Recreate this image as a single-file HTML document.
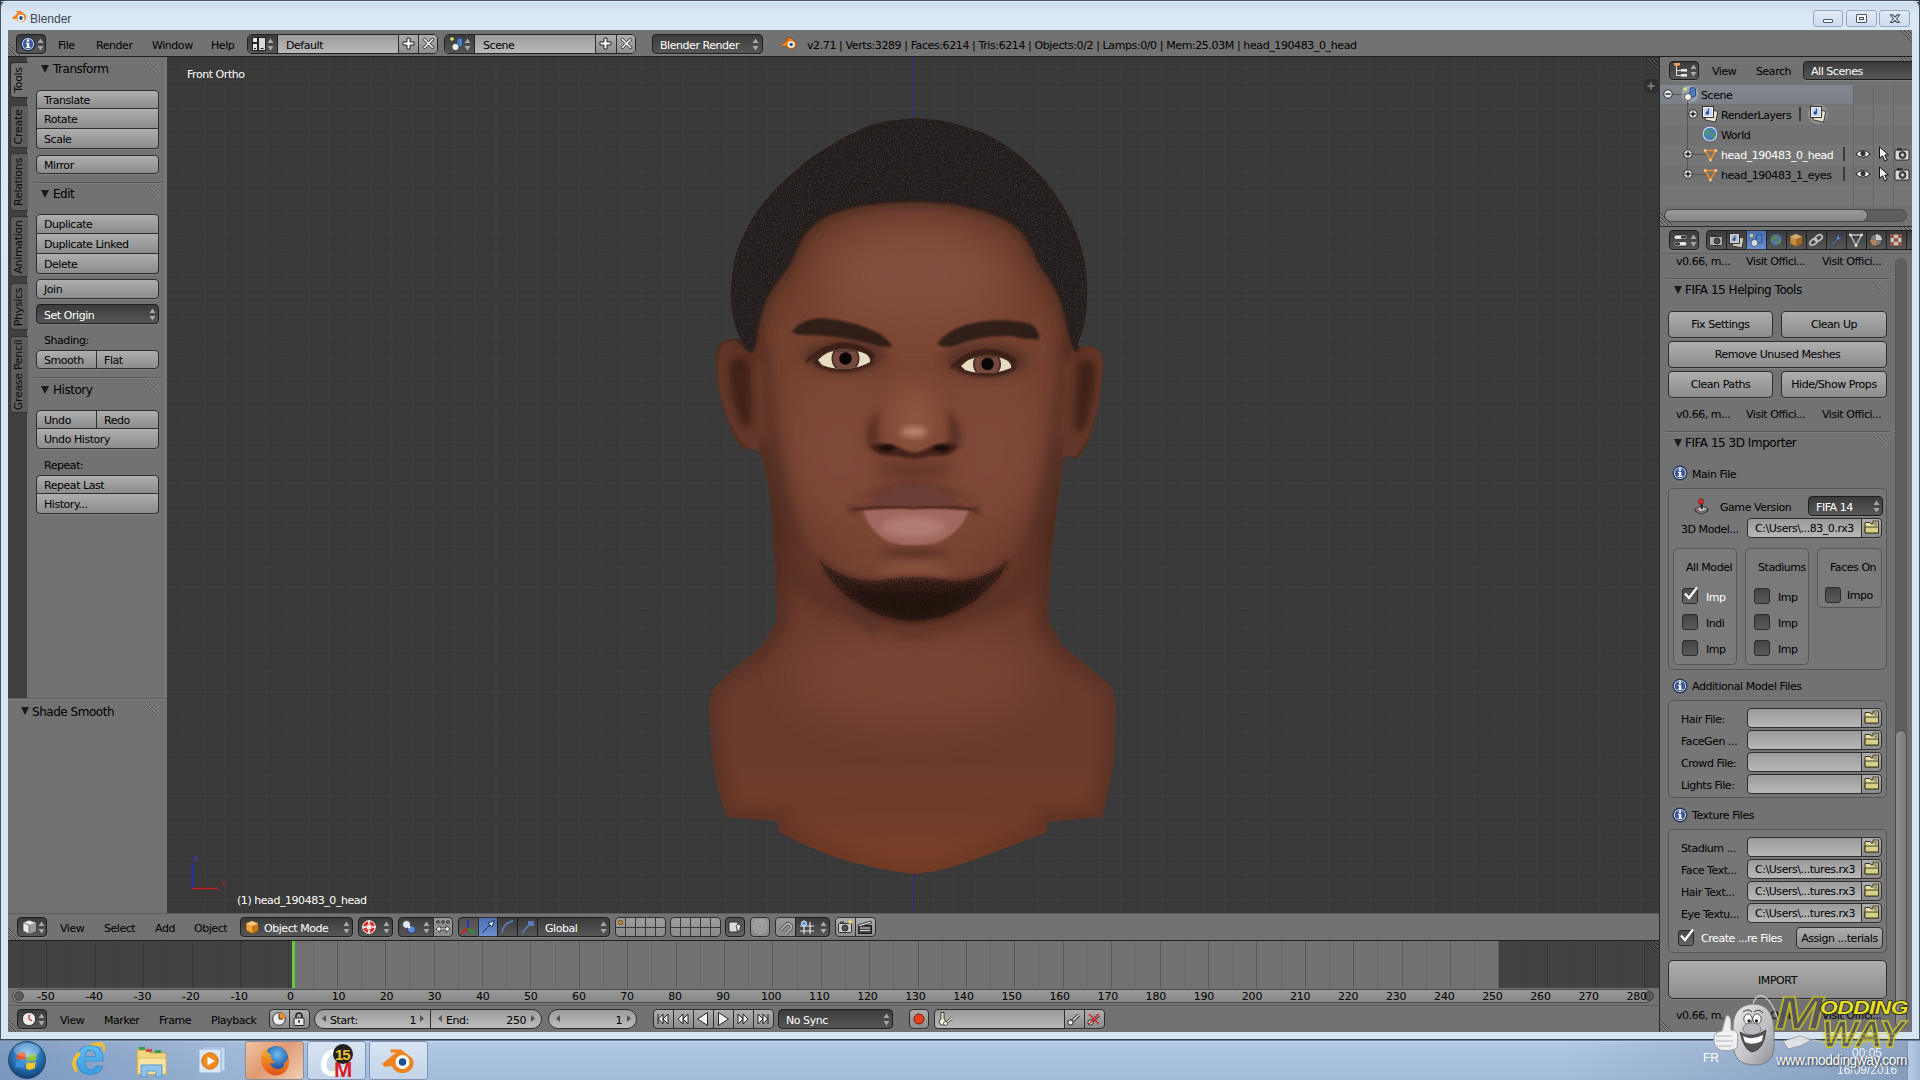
<!DOCTYPE html>
<html><head><meta charset="utf-8"><title>Blender</title>
<style>
*{box-sizing:border-box;margin:0;padding:0}
html,body{width:1920px;height:1080px;overflow:hidden;background:#2c3742}
body{position:relative;font-family:'DejaVu Sans','Liberation Sans',sans-serif;font-size:11px;letter-spacing:-0.45px;color:#000}
div,svg{position:absolute}
.t{white-space:nowrap;line-height:14px;height:14px}
.btn{border:1px solid #2e2e2e;border-radius:4px;background:linear-gradient(#aeaeae,#8c8c8c);white-space:nowrap;overflow:hidden;box-shadow:0 1px 0 rgba(255,255,255,.12)}
.btn span{position:absolute;left:7px;top:50%;line-height:14px;margin-top:-6px}
.btn.c span{left:0;right:0;text-align:center}
.dk{border:1px solid #1e1e1e;border-radius:4px;background:linear-gradient(#3b3b3b,#575757);color:#fff;white-space:nowrap;overflow:hidden;box-shadow:0 1px 0 rgba(255,255,255,.12)}
.dk span{position:absolute;left:7px;top:50%;line-height:14px;margin-top:-5px}
.fld{border:1px solid #2e2e2e;border-radius:4px;background:linear-gradient(#9a9a9a,#b8b8b8);white-space:nowrap;overflow:hidden}
.fld span{position:absolute;left:7px;top:50%;line-height:14px;margin-top:-6px}
.num{border:1px solid #2e2e2e;border-radius:9px;background:linear-gradient(#9c9c9c,#bdbdbd);white-space:nowrap;overflow:hidden}
.ph{font-size:12px;letter-spacing:-0.47px}
</style></head>
<body>
<!-- chrome -->
<div style="left:0px;top:0px;width:1920px;height:1040px;background:linear-gradient(#c9d9ec 0,#dce8f5 14px,#d9e6f4 30px,#d7e4f2 100%);border:1px solid #4a5560;border-bottom:1px solid #3c444e;border-radius:7px 7px 0 0"></div>
<div style="left:1px;top:1px;width:1918px;height:1px;background:#eef4fb;opacity:.8"></div>
<svg style="left:11px;top:9px" width="17" height="16" viewBox="0 0 17 16">
<path d="M1 9 L7.5 3.2 L5.2 3.2 L5.2 2 L10 2 L15 6.2 A5 5 0 1 1 5.6 9.8 L2.2 10.2 Z" fill="#f08220"/>
<circle cx="10" cy="9" r="3.4" fill="#fff"/><circle cx="10" cy="9" r="1.9" fill="#1f4f90"/></svg>
<div class="t" style="left:30px;top:12px;color:#3a4556;font-size:12px;letter-spacing:0;font-family:'Liberation Sans',sans-serif;font-size:12px">Blender</div>
<div style="left:1813px;top:10px;width:30px;height:17px;border:1px solid #93a7c3;border-radius:3px;background:linear-gradient(#e2ebf6,#cfdcee)"></div>
<div style="left:1846px;top:10px;width:31px;height:17px;border:1px solid #93a7c3;border-radius:3px;background:linear-gradient(#e2ebf6,#cfdcee)"></div>
<div style="left:1879px;top:10px;width:31px;height:17px;border:1px solid #93a7c3;border-radius:3px;background:linear-gradient(#e2ebf6,#cfdcee)"></div>
<div style="left:1823px;top:19px;width:10px;height:4px;border:1px solid #4b5868;background:#f4f7fb;border-radius:1px"></div>
<div style="left:1856px;top:14px;width:11px;height:9px;border:1px solid #4b5868;background:#f4f7fb;border-radius:1px"></div>
<div style="left:1859px;top:17px;width:5px;height:3px;border:1px solid #4b5868;background:#d5e0ee"></div>
<svg style="left:1888.5px;top:13.5px" width="12" height="9.5" viewBox="0 0 13 11" preserveAspectRatio="none"><path d="M1.5 1 L4.2 1 L6.5 3.6 L8.8 1 L11.5 1 L8.2 5.5 L11.5 10 L8.8 10 L6.5 7.4 L4.2 10 L1.5 10 L4.8 5.5 Z" fill="#f4f7fb" stroke="#4b5868" stroke-width="1.2"/></svg>
<div style="left:8px;top:30px;width:1904px;height:1002px;background:#2a2a2a"></div>
<div style="left:0px;top:1040px;width:1920px;height:40px;background:linear-gradient(#b4cae4 0,#a9c2df 40%,#a3bddb 100%);border-top:1px solid #6c7f96"></div>
<div style="left:0px;top:1041px;width:1920px;height:1px;background:#cfdff0;opacity:.7"></div>
<div style="left:0px;top:1041px;width:330px;height:39px;background:linear-gradient(90deg,rgba(90,120,165,.55),rgba(90,120,165,0))"></div>
<div style="left:1560px;top:1041px;width:360px;height:39px;background:linear-gradient(90deg,rgba(80,100,135,0),rgba(80,100,135,.38))"></div>
<svg style="left:5px;top:1040px" width="44" height="40" viewBox="0 0 44 40">
<defs><radialGradient id="orb" cx="50%" cy="35%" r="65%"><stop offset="0" stop-color="#7fc3ee"/><stop offset=".55" stop-color="#2a77b8"/><stop offset="1" stop-color="#123e72"/></radialGradient></defs>
<circle cx="22" cy="20" r="18.5" fill="url(#orb)" stroke="#274a74" stroke-width="1"/>
<path d="M12.5 13.5 Q17 11 21 13.5 L20 20 Q16.5 18 11.5 20 Z" fill="#e8542a"/>
<path d="M23 13.8 Q27 16 32 13.5 L31 20 Q26.5 22.5 22 20.2 Z" fill="#8fc43a"/>
<path d="M11.2 21.5 Q16 19.5 19.8 21.8 L18.8 28.5 Q15 26 10.2 28 Z" fill="#3a8fdc"/>
<path d="M21.8 22 Q26 24.3 30.8 21.8 L29.8 28.3 Q25 30.8 20.8 28.6 Z" fill="#f6c62d"/>
<ellipse cx="22" cy="10" rx="13" ry="7" fill="#fff" opacity=".25"/></svg>
<svg style="left:68px;top:1040px" width="44" height="40" viewBox="0 0 44 40">
<defs><linearGradient id="ieg" x1="0" y1="0" x2="0" y2="1"><stop offset="0" stop-color="#7fd0f6"/><stop offset="1" stop-color="#2a93dc"/></linearGradient></defs>
<path d="M8 30 Q2 22 12 12 Q22 3 34 4" fill="none" stroke="#f0bf35" stroke-width="3.2" stroke-linecap="round"/>
<text x="7" y="34" font-family="'Liberation Sans',sans-serif" font-size="54" font-weight="bold" fill="url(#ieg)" stroke="#2a7fc8" stroke-width=".6" letter-spacing="0">e</text>
<path d="M8 30 Q3 23 11 14" fill="none" stroke="#f0bf35" stroke-width="3.2" stroke-linecap="round"/>
<path d="M30 5 Q37 4 36 10" fill="none" stroke="#f0bf35" stroke-width="2.6" stroke-linecap="round"/></svg>
<svg style="left:134px;top:1044px" width="36" height="34" viewBox="0 0 36 34">
<path d="M3 6 L14 6 L16 9 L32 9 L32 30 L3 30 Z" fill="#f3d681" stroke="#c9a545" stroke-width="1"/>
<rect x="5" y="3" width="6" height="3" fill="#3d9c4a"/><rect x="12" y="5" width="6" height="3" fill="#d64a3a"/><rect x="21" y="6" width="6" height="3" fill="#3d9c4a"/>
<path d="M4 14 L32 14 L32 30 L4 30 Z" fill="#f8e5a6" stroke="#d4b45a" stroke-width=".8"/>
<path d="M7 21 L28 21 L28 33 L22 33 L22 27 L13 27 L13 33 L7 33 Z" fill="#8fc3ec" stroke="#5c97c8" stroke-width="1"/></svg>
<svg style="left:196px;top:1046px" width="34" height="30" viewBox="0 0 34 30">
<rect x="7" y="1" width="22" height="24" fill="#c7dcf0" stroke="#8fb2d6" stroke-width="1"/>
<rect x="3" y="3" width="22" height="24" fill="#dbe9f6" stroke="#8fb2d6" stroke-width="1"/>
<circle cx="14" cy="15" r="8.3" fill="#f08a1e" stroke="#c86a10" stroke-width=".8"/><path d="M11.5 10.5 L19 15 L11.5 19.5 Z" fill="#fff"/></svg>
<div style="left:245px;top:1041px;width:59px;height:39px;border:1px solid #8a8fa0;border-radius:3px;background:linear-gradient(135deg,#f2c4a4 0,#e09a72 45%,#f1cdb6 100%)"></div>
<div style="left:307px;top:1041px;width:59px;height:39px;border:1px solid #7f94b4;border-radius:3px;background:linear-gradient(#d9e5f3,#c2d3e8)"></div>
<div style="left:369px;top:1041px;width:59px;height:39px;border:1px solid #7f94b4;border-radius:3px;background:linear-gradient(#d9e5f3,#c2d3e8)"></div>
<svg style="left:258px;top:1043px" width="34" height="34" viewBox="0 0 34 34">
<defs><radialGradient id="ffg" cx="55%" cy="35%" r="60%"><stop offset="0" stop-color="#6cc0f0"/><stop offset="1" stop-color="#1d4e9e"/></radialGradient>
<linearGradient id="ffo" x1="0" y1="0" x2="0" y2="1"><stop offset="0" stop-color="#f6b12b"/><stop offset="1" stop-color="#e2511a"/></linearGradient></defs>
<circle cx="18" cy="15" r="12" fill="url(#ffg)"/>
<path d="M3 12 Q2 24 10 30 Q18 35 26 30 Q33 24 31 12 Q30 18 26 20 Q27 26 19 26 Q13 25 12 20 Q15 21 17 19 Q12 16 13 12 Q9 10 8 5 Q4 8 5 13 Z" fill="url(#ffo)"/></svg>
<svg style="left:317px;top:1043px" width="42" height="36" viewBox="0 0 42 36">
<text x="2" y="33" font-family="'Liberation Sans',sans-serif" font-style="italic" font-weight="bold" font-size="38" fill="#fff">C</text>
<text x="17" y="34" font-family="'Liberation Sans',sans-serif" font-weight="bold" font-size="22" fill="#d61f2c">M</text>
<circle cx="26" cy="11" r="10" fill="#222"/>
<text x="18" y="17" font-family="'Liberation Sans',sans-serif" font-weight="bold" font-size="15" fill="#f2c12a" letter-spacing="-1">15</text></svg>
<svg style="left:381px;top:1045px" width="36" height="30" viewBox="0 0 36 30">
<path d="M1 19 L15 7.5 L9.5 7.5 L9.5 4.5 L20 4.5 L31 13 A11 10 0 1 1 11 21 L4 22 Z" fill="#f08220"/>
<circle cx="21.5" cy="17" r="7" fill="#fff"/><circle cx="21.5" cy="17" r="3.8" fill="#1f4f90"/></svg>
<div class="t" style="left:1703px;top:1051px;color:#fff;font-size:12px;letter-spacing:0;font-family:'Liberation Sans',sans-serif">FR</div>
<div class="t" style="left:1852px;top:1046px;color:#fff;font-size:12px;letter-spacing:0;font-family:'Liberation Sans',sans-serif;opacity:.85">00:05</div>
<div class="t" style="left:1837px;top:1063px;color:#fff;font-size:12px;letter-spacing:0;font-family:'Liberation Sans',sans-serif;opacity:.85">16/09/2016</div>
<div style="left:1907px;top:1041px;width:13px;height:39px;border-left:1px solid #7f94b4;background:linear-gradient(90deg,#b9cde6,#9fb8d6)"></div>
<!-- info -->
<div style="left:8px;top:30px;width:1904px;height:27px;background:#727272;border-bottom:1px solid #1f1f1f"></div>
<svg style="left:8px;top:44px" width="12" height="12" viewBox="0 0 12 12"><path d="M0 1 L11 12 M0 5 L7 12 M0 9 L3 12" stroke="rgba(255,255,255,.16)" stroke-width="1" fill="none"/><path d="M0 0 L12 12 M0 4 L8 12 M0 8 L4 12" stroke="rgba(0,0,0,.42)" stroke-width="1" fill="none"/></svg>
<svg style="left:1900px;top:30px" width="12" height="12" viewBox="0 0 12 12"><path d="M1 0 L12 11 M5 0 L12 7 M9 0 L12 3" stroke="rgba(255,255,255,.16)" stroke-width="1" fill="none"/><path d="M0 0 L12 12 M4 0 L12 8 M8 0 L12 4" stroke="rgba(0,0,0,.42)" stroke-width="1" fill="none"/></svg>
<div class="dk" style="left:16px;top:34px;width:30px;height:20px;"></div>
<svg style="left:20px;top:36px" width="16" height="16" viewBox="0 0 16 16"><circle cx="8" cy="8" r="6.8" fill="#e9eef7" stroke="#27365a" stroke-width="1.6"/><circle cx="8" cy="8" r="5.2" fill="#3e5a9a"/><rect x="7" y="6.8" width="2.2" height="5" fill="#fff"/><rect x="6" y="6.8" width="2" height="1.2" fill="#fff"/><rect x="5.8" y="10.8" width="4.6" height="1.2" fill="#fff"/><circle cx="8" cy="4.6" r="1.3" fill="#fff"/></svg>
<svg style="left:37px;top:38px" width="7" height="13" viewBox="0 0 7 13"><path d="M3.5 0.5 L6.5 5 L0.5 5 Z M3.5 12.5 L6.5 8 L0.5 8 Z" fill="#a8a8a8"/></svg>
<div class="t" style="left:58px;top:39px;color:#000;font-size:11px;">File</div>
<div class="t" style="left:96px;top:39px;color:#000;font-size:11px;">Render</div>
<div class="t" style="left:152px;top:39px;color:#000;font-size:11px;">Window</div>
<div class="t" style="left:211px;top:39px;color:#000;font-size:11px;">Help</div>
<div style="left:247px;top:34px;width:191px;height:20px;border:1px solid #222;border-radius:5px;background:linear-gradient(#9c9c9c,#b9b9b9);overflow:hidden"><div style="left:-1px;top:-1px;width:31px;height:20px;background:linear-gradient(#3a3a3a,#565656);border-right:1px solid #222"></div><div style="left:150px;top:-1px;width:20px;height:20px;background:linear-gradient(#aeaeae,#8c8c8c);border-left:1px solid #2e2e2e"></div><div style="left:170px;top:-1px;width:20px;height:20px;background:linear-gradient(#aeaeae,#8c8c8c);border-left:1px solid #2e2e2e"></div></div>
<svg style="left:252px;top:37px" width="14" height="14" viewBox="0 0 14 14"><rect x=".5" y=".5" width="5" height="5" fill="#e8e8e8" stroke="#222"/><rect x=".5" y="6.5" width="5" height="7" fill="#e8e8e8" stroke="#222"/><rect x="6.5" y=".5" width="7" height="13" fill="#d8d8d8" stroke="#222"/><rect x="2" y="11" width="2" height="1" fill="#222"/><rect x="8.5" y="11" width="3" height="1" fill="#222"/></svg>
<svg style="left:267px;top:38px" width="7" height="13" viewBox="0 0 7 13"><path d="M3.5 0.5 L6.5 5 L0.5 5 Z M3.5 12.5 L6.5 8 L0.5 8 Z" fill="#a8a8a8"/></svg>
<div class="t" style="left:286px;top:39px;color:#000;font-size:11px;">Default</div>
<svg style="left:402px;top:37px" width="13" height="13" viewBox="0 0 13 13"><path d="M5 1 L8 1 L8 5 L12 5 L12 8 L8 8 L8 12 L5 12 L5 8 L1 8 L1 5 L5 5 Z" fill="#fff" stroke="#222" stroke-width="1"/></svg>
<svg style="left:422px;top:37px" width="13" height="13" viewBox="0 0 13 13"><path d="M1 2.6 L2.6 1 L6.5 4.9 L10.4 1 L12 2.6 L8.1 6.5 L12 10.4 L10.4 12 L6.5 8.1 L2.6 12 L1 10.4 L4.9 6.5 Z" fill="#fff" stroke="#222" stroke-width="1"/></svg>
<div style="left:444px;top:34px;width:192px;height:20px;border:1px solid #222;border-radius:5px;background:linear-gradient(#9c9c9c,#b9b9b9);overflow:hidden"><div style="left:-1px;top:-1px;width:31px;height:20px;background:linear-gradient(#3a3a3a,#565656);border-right:1px solid #222"></div><div style="left:150px;top:-1px;width:21px;height:20px;background:linear-gradient(#aeaeae,#8c8c8c);border-left:1px solid #2e2e2e"></div><div style="left:171px;top:-1px;width:20px;height:20px;background:linear-gradient(#aeaeae,#8c8c8c);border-left:1px solid #2e2e2e"></div></div>
<svg style="left:449px;top:36px" width="16" height="16" viewBox="0 0 16 16"><rect x="8" y="2" width="5.5" height="9" rx="2.2" fill="#4b7fc2" stroke="#1d3a6a" stroke-width=".8"/><circle cx="6.5" cy="11" r="3.6" fill="#ececec" stroke="#333" stroke-width=".8"/><circle cx="3" cy="3" r="1.8" fill="#e9e27a"/></svg>
<svg style="left:464px;top:38px" width="7" height="13" viewBox="0 0 7 13"><path d="M3.5 0.5 L6.5 5 L0.5 5 Z M3.5 12.5 L6.5 8 L0.5 8 Z" fill="#a8a8a8"/></svg>
<div class="t" style="left:483px;top:39px;color:#000;font-size:11px;">Scene</div>
<svg style="left:599px;top:37px" width="13" height="13" viewBox="0 0 13 13"><path d="M5 1 L8 1 L8 5 L12 5 L12 8 L8 8 L8 12 L5 12 L5 8 L1 8 L1 5 L5 5 Z" fill="#fff" stroke="#222" stroke-width="1"/></svg>
<svg style="left:620px;top:37px" width="13" height="13" viewBox="0 0 13 13"><path d="M1 2.6 L2.6 1 L6.5 4.9 L10.4 1 L12 2.6 L8.1 6.5 L12 10.4 L10.4 12 L6.5 8.1 L2.6 12 L1 10.4 L4.9 6.5 Z" fill="#fff" stroke="#222" stroke-width="1"/></svg>
<div class="dk" style="left:652px;top:34px;width:111px;height:20px;"><span style="">Blender Render</span></div>
<svg style="left:752px;top:38px" width="7" height="13" viewBox="0 0 7 13"><path d="M3.5 0.5 L6.5 5 L0.5 5 Z M3.5 12.5 L6.5 8 L0.5 8 Z" fill="#a8a8a8"/></svg>
<svg style="left:781px;top:36px" width="17" height="15" viewBox="0 0 17 15">
<path d="M0.5 9 L7 3.4 L4.4 3.4 L4.4 2 L9.6 2 L15 6.2 A5.2 4.8 0 1 1 5.2 10 L2 10.5 Z" fill="#f08220" stroke="#7a3a0a" stroke-width=".5"/>
<circle cx="10.2" cy="8.5" r="3.3" fill="#fff"/><circle cx="10.2" cy="8.5" r="1.8" fill="#1f4f90"/></svg>
<div class="t" style="left:807px;top:39px;color:#000;font-size:11px;letter-spacing:-0.40px">v2.71 | Verts:3289 | Faces:6214 | Tris:6214 | Objects:0/2 | Lamps:0/0 | Mem:25.03M | head_190483_0_head</div>
<!-- tools -->
<div style="left:8px;top:57px;width:20px;height:641px;background:#404040"></div>
<div style="left:27px;top:57px;width:140px;height:641px;background:#727272"></div>
<div style="left:163px;top:57px;width:4px;height:641px;background:linear-gradient(90deg,#727272,#7a7a7a)"></div>
<div style="left:10px;top:62px;width:18px;height:36px;background:#727272;border-radius:4px 0 0 4px;border:1px solid #2a2a2a;border-right:none"></div><div class="t" style="left:11px;top:62px;width:16px;height:36px"><div class="t" style="left:8px;top:18.0px;transform:translate(-50%,-50%) rotate(-90deg);font-size:11px;letter-spacing:-0.3px;color:#0a0a0a">Tools</div></div>
<div style="left:10px;top:105px;width:18px;height:43px;background:#5d5d5d;border-radius:4px 0 0 4px;border:1px solid #333;border-right:none"></div><div class="t" style="left:11px;top:105px;width:16px;height:43px"><div class="t" style="left:8px;top:21.5px;transform:translate(-50%,-50%) rotate(-90deg);font-size:11px;letter-spacing:-0.3px;color:#0a0a0a">Create</div></div>
<div style="left:10px;top:153px;width:18px;height:58px;background:#5d5d5d;border-radius:4px 0 0 4px;border:1px solid #333;border-right:none"></div><div class="t" style="left:11px;top:153px;width:16px;height:58px"><div class="t" style="left:8px;top:29.0px;transform:translate(-50%,-50%) rotate(-90deg);font-size:11px;letter-spacing:-0.3px;color:#0a0a0a">Relations</div></div>
<div style="left:10px;top:216px;width:18px;height:61px;background:#5d5d5d;border-radius:4px 0 0 4px;border:1px solid #333;border-right:none"></div><div class="t" style="left:11px;top:216px;width:16px;height:61px"><div class="t" style="left:8px;top:30.5px;transform:translate(-50%,-50%) rotate(-90deg);font-size:11px;letter-spacing:-0.3px;color:#0a0a0a">Animation</div></div>
<div style="left:10px;top:283px;width:18px;height:47px;background:#5d5d5d;border-radius:4px 0 0 4px;border:1px solid #333;border-right:none"></div><div class="t" style="left:11px;top:283px;width:16px;height:47px"><div class="t" style="left:8px;top:23.5px;transform:translate(-50%,-50%) rotate(-90deg);font-size:11px;letter-spacing:-0.3px;color:#0a0a0a">Physics</div></div>
<div style="left:10px;top:336px;width:18px;height:77px;background:#5d5d5d;border-radius:4px 0 0 4px;border:1px solid #333;border-right:none"></div><div class="t" style="left:11px;top:336px;width:16px;height:77px"><div class="t" style="left:8px;top:38.5px;transform:translate(-50%,-50%) rotate(-90deg);font-size:11px;letter-spacing:-0.3px;color:#0a0a0a">Grease Pencil</div></div>
<svg style="left:41px;top:65px" width="8" height="8" viewBox="0 0 8 8"><path d="M0 0 L8 0 L4 8 Z" fill="#1a1a1a"/></svg>
<div class="t ph" style="left:53px;top:62px;color:#000;font-size:12px;">Transform</div>
<svg style="left:145px;top:62px" width="14" height="14" viewBox="0 0 14 14"><path d="M1 0 L14 13 M5 0 L14 9 M9 0 L14 5" stroke="#8a8a8a" stroke-width="1" fill="none"/><path d="M0 0 L13 13 M4 0 L13 9 M8 0 L13 5" stroke="#5c5c5c" stroke-width="1" fill="none"/></svg>
<div class="btn" style="left:36px;top:90px;width:123px;height:19px;border-radius:4px 4px 0 0;box-shadow:none;"><span style="">Translate</span></div><div class="btn" style="left:36px;top:109px;width:123px;height:20px;border-radius:0;border-top:none;box-shadow:none;"><span style="">Rotate</span></div><div class="btn" style="left:36px;top:129px;width:123px;height:20px;border-radius:0 0 4px 4px;border-top:none;"><span style="">Scale</span></div>
<div class="btn" style="left:36px;top:155px;width:123px;height:19px;border-radius:4px;"><span style="">Mirror</span></div>
<div style="left:33px;top:182px;width:129px;height:1px;background:#5a5a5a"></div>
<div style="left:33px;top:183px;width:129px;height:1px;background:#7e7e7e"></div>
<svg style="left:41px;top:190px" width="8" height="8" viewBox="0 0 8 8"><path d="M0 0 L8 0 L4 8 Z" fill="#1a1a1a"/></svg>
<div class="t ph" style="left:53px;top:187px;color:#000;font-size:12px;">Edit</div>
<svg style="left:145px;top:187px" width="14" height="14" viewBox="0 0 14 14"><path d="M1 0 L14 13 M5 0 L14 9 M9 0 L14 5" stroke="#8a8a8a" stroke-width="1" fill="none"/><path d="M0 0 L13 13 M4 0 L13 9 M8 0 L13 5" stroke="#5c5c5c" stroke-width="1" fill="none"/></svg>
<div class="btn" style="left:36px;top:214px;width:123px;height:20px;border-radius:4px 4px 0 0;box-shadow:none;"><span style="">Duplicate</span></div><div class="btn" style="left:36px;top:234px;width:123px;height:20px;border-radius:0;border-top:none;box-shadow:none;"><span style="">Duplicate Linked</span></div><div class="btn" style="left:36px;top:254px;width:123px;height:20px;border-radius:0 0 4px 4px;border-top:none;"><span style="">Delete</span></div>
<div class="btn" style="left:36px;top:279px;width:123px;height:20px;border-radius:4px;"><span style="">Join</span></div>
<div class="dk" style="left:36px;top:304px;width:123px;height:20px;"><span style="">Set Origin</span></div>
<svg style="left:149px;top:308px" width="7" height="13" viewBox="0 0 7 13"><path d="M3.5 0.5 L6.5 5 L0.5 5 Z M3.5 12.5 L6.5 8 L0.5 8 Z" fill="#a8a8a8"/></svg>
<div class="t" style="left:44px;top:334px;color:#000;font-size:11px;">Shading:</div>
<div class="btn" style="left:36px;top:350px;width:61px;height:19px;border-radius:4px 0 0 4px"><span style="">Smooth</span></div><div class="btn" style="left:96px;top:350px;width:63px;height:19px;border-radius:0 4px 4px 0"><span style="">Flat</span></div>
<div style="left:33px;top:377px;width:129px;height:1px;background:#5a5a5a"></div>
<div style="left:33px;top:378px;width:129px;height:1px;background:#7e7e7e"></div>
<svg style="left:41px;top:386px" width="8" height="8" viewBox="0 0 8 8"><path d="M0 0 L8 0 L4 8 Z" fill="#1a1a1a"/></svg>
<div class="t ph" style="left:53px;top:383px;color:#000;font-size:12px;">History</div>
<svg style="left:145px;top:382px" width="14" height="14" viewBox="0 0 14 14"><path d="M1 0 L14 13 M5 0 L14 9 M9 0 L14 5" stroke="#8a8a8a" stroke-width="1" fill="none"/><path d="M0 0 L13 13 M4 0 L13 9 M8 0 L13 5" stroke="#5c5c5c" stroke-width="1" fill="none"/></svg>
<div class="btn" style="left:36px;top:410px;width:61px;height:19px;border-radius:4px 0 0 0;box-shadow:none"><span style="">Undo</span></div>
<div class="btn" style="left:96px;top:410px;width:63px;height:19px;border-radius:0 4px 0 0;box-shadow:none"><span style="">Redo</span></div>
<div class="btn" style="left:36px;top:428px;width:123px;height:21px;border-radius:0 0 4px 4px"><span style="">Undo History</span></div>
<div class="t" style="left:44px;top:459px;color:#000;font-size:11px;">Repeat:</div>
<div class="btn" style="left:36px;top:475px;width:123px;height:19px;border-radius:4px 4px 0 0;box-shadow:none;"><span style="">Repeat Last</span></div><div class="btn" style="left:36px;top:494px;width:123px;height:20px;border-radius:0 0 4px 4px;border-top:none;"><span style="">History...</span></div>
<div style="left:8px;top:698px;width:159px;height:215px;background:#727272;border-top:1px solid #5c5c5c"></div>
<div style="left:8px;top:699px;width:159px;height:1px;background:#808080"></div>
<svg style="left:21px;top:707px" width="8" height="8" viewBox="0 0 8 8"><path d="M0 0 L8 0 L4 8 Z" fill="#1a1a1a"/></svg>
<div class="t ph" style="left:32px;top:705px;color:#000;font-size:12px;">Shade Smooth</div>
<svg style="left:145px;top:703px" width="14" height="14" viewBox="0 0 14 14"><path d="M1 0 L14 13 M5 0 L14 9 M9 0 L14 5" stroke="#8a8a8a" stroke-width="1" fill="none"/><path d="M0 0 L13 13 M4 0 L13 9 M8 0 L13 5" stroke="#5c5c5c" stroke-width="1" fill="none"/></svg>
<!-- view3d -->
<div style="left:167px;top:57px;width:1492px;height:856px;background-color:#393939;background-image:linear-gradient(90deg,rgba(255,255,255,.028) 1px,transparent 1px),linear-gradient(rgba(255,255,255,.028) 1px,transparent 1px);background-size:20.84px 20.84px;background-position:16.1px 9.4px;overflow:hidden"></div>
<svg style="left:0;top:0" width="1920" height="1080" viewBox="0 0 1920 1080">
<defs>
<linearGradient id="fadeg" x1="0" y1="540" x2="0" y2="680" gradientUnits="userSpaceOnUse"><stop offset="0" stop-color="#fff"/><stop offset="1" stop-color="#000"/></linearGradient>
<mask id="upper" maskUnits="userSpaceOnUse" x="690" y="100" width="450" height="800"><rect x="690" y="100" width="450" height="800" fill="url(#fadeg)"/></mask>
<clipPath id="topc"><rect x="700" y="100" width="430" height="252"/></clipPath>
<clipPath id="vp"><rect x="167" y="57" width="1492" height="856"/></clipPath>
<clipPath id="sil"><path d="M914.0 118.5 C918.7 118.9 933.2 119.5 942.0 121.0 C950.8 122.5 958.7 124.8 967.0 127.5 C975.3 130.2 983.7 133.1 992.0 137.5 C1000.3 141.9 1008.7 147.3 1017.0 154.0 C1025.3 160.7 1034.5 169.0 1042.0 177.5 C1049.5 186.0 1056.3 195.8 1062.0 205.0 C1067.7 214.2 1072.3 223.3 1076.0 232.5 C1079.7 241.7 1082.2 250.8 1084.0 260.0 C1085.8 269.2 1086.7 278.8 1087.0 287.5 C1087.3 296.2 1087.0 304.6 1086.0 312.5 C1085.0 320.4 1082.3 329.4 1081.0 335.0 C1079.7 340.6 1077.2 344.2 1078.0 346.0 C1078.8 347.8 1082.8 345.5 1086.0 346.0 C1089.2 346.5 1094.3 347.0 1097.0 349.0 C1099.7 351.0 1101.2 353.7 1102.0 358.0 C1102.8 362.3 1102.7 366.8 1102.0 375.0 C1101.3 383.2 1100.0 396.7 1098.0 407.0 C1096.0 417.3 1093.3 428.7 1090.0 437.0 C1086.7 445.3 1082.0 453.8 1078.0 457.0 C1074.0 460.2 1068.7 453.8 1066.0 456.0 C1063.3 458.2 1063.5 461.5 1062.0 470.0 C1060.5 478.5 1058.8 492.0 1057.0 507.0 C1055.2 522.0 1052.3 544.5 1051.0 560.0 C1049.7 575.5 1049.3 589.7 1049.0 600.0 C1048.7 610.3 1049.0 618.3 1049.0 622.0 L1049.0 622.0 L1062.0 645.0 L1092.0 670.0 L1112.0 687.0 L1116.0 705.0 L1114.0 760.0 L1107.0 797.0 L1102.0 817.0 L1048.0 822.0 L1046.0 832.5 L1030.0 838.5 L1010.0 846.0 L992.0 853.0 L973.0 860.0 L955.0 866.0 L935.0 871.0 L914.0 874.0 L893.0 871.0 L873.0 867.0 L855.0 863.0 L830.0 855.0 L805.0 845.0 L780.0 832.5 L777.0 821.0 L727.5 817.0 L720.0 797.0 L712.5 760.0 L709.0 705.0 L712.5 690.0 L730.0 672.5 L762.5 645.0 L776.0 622.5 C776.0 618.8 776.2 610.4 776.0 600.0 C775.8 589.6 776.0 577.5 775.0 560.0 C774.0 542.5 772.0 511.3 770.0 495.0 C768.0 478.7 765.2 469.5 763.0 462.0 C760.8 454.5 760.5 452.5 757.0 450.0 C753.5 447.5 746.5 450.8 742.0 447.0 C737.5 443.2 733.7 435.7 730.0 427.0 C726.3 418.3 722.3 406.2 720.0 395.0 C717.7 383.8 716.2 368.2 716.0 360.0 C715.8 351.8 717.2 349.3 719.0 346.0 C720.8 342.7 723.8 341.2 727.0 340.0 C730.2 338.8 735.2 338.3 738.0 339.0 C740.8 339.7 743.7 344.2 744.0 344.0 C744.3 343.8 741.7 341.5 740.0 337.5 C738.3 333.5 735.5 326.2 734.0 320.0 C732.5 313.8 731.3 306.7 731.0 300.0 C730.7 293.3 731.2 287.5 732.0 280.0 C732.8 272.5 733.8 262.9 736.0 255.0 C738.2 247.1 741.0 240.4 745.0 232.5 C749.0 224.6 754.2 215.4 760.0 207.5 C765.8 199.6 772.5 192.5 780.0 185.0 C787.5 177.5 796.7 169.0 805.0 162.5 C813.3 156.0 821.7 151.0 830.0 146.0 C838.3 141.0 846.7 136.4 855.0 132.5 C863.3 128.6 870.2 124.8 880.0 122.5 C889.8 120.2 908.3 119.2 914.0 118.5Z"/></clipPath>
<filter id="b3" x="-30%" y="-30%" width="160%" height="160%"><feGaussianBlur stdDeviation="3"/></filter>
<filter id="b6" x="-30%" y="-30%" width="160%" height="160%"><feGaussianBlur stdDeviation="6"/></filter>
<filter id="b12" x="-40%" y="-40%" width="180%" height="180%"><feGaussianBlur stdDeviation="12"/></filter>
<filter id="b20" x="-50%" y="-50%" width="200%" height="200%"><feGaussianBlur stdDeviation="20"/></filter>
<filter id="hn" x="0" y="0" width="100%" height="100%" color-interpolation-filters="sRGB"><feTurbulence type="fractalNoise" baseFrequency="0.85" numOctaves="2" seed="3" result="n"/><feColorMatrix in="n" values="0 0 0 0 0.34  0 0 0 0 0.28  0 0 0 0 0.25  0 0 0 2.0 -1.0" result="c"/><feComposite in="c" in2="SourceGraphic" operator="in"/></filter>
<filter id="bn" x="0" y="0" width="100%" height="100%" color-interpolation-filters="sRGB"><feTurbulence type="fractalNoise" baseFrequency="0.8" numOctaves="2" seed="7" result="n"/><feColorMatrix in="n" values="0 0 0 0 0.08  0 0 0 0 0.05  0 0 0 0 0.04  0 0 0 2.4 -1.05" result="c"/><feComposite in="c" in2="SourceGraphic" operator="in"/></filter>
<filter id="b1" x="-20%" y="-20%" width="140%" height="140%"><feGaussianBlur stdDeviation="1.2"/></filter>
<linearGradient id="skin" x1="0" y1="118" x2="0" y2="874" gradientUnits="userSpaceOnUse">
<stop offset="0" stop-color="#6e3f31"/><stop offset=".35" stop-color="#724130"/><stop offset=".62" stop-color="#6a3c2e"/><stop offset=".85" stop-color="#6a3b2c"/><stop offset="1" stop-color="#763d28"/></linearGradient>
</defs>
<g clip-path="url(#vp)">
<line x1="913.5" y1="57" x2="913.5" y2="913" stroke="#2a2a8c" stroke-width="1"/>
<g clip-path="url(#topc)"><path d="M914.0 118.5 C918.7 118.9 933.2 119.5 942.0 121.0 C950.8 122.5 958.7 124.8 967.0 127.5 C975.3 130.2 983.7 133.1 992.0 137.5 C1000.3 141.9 1008.7 147.3 1017.0 154.0 C1025.3 160.7 1034.5 169.0 1042.0 177.5 C1049.5 186.0 1056.3 195.8 1062.0 205.0 C1067.7 214.2 1072.3 223.3 1076.0 232.5 C1079.7 241.7 1082.2 250.8 1084.0 260.0 C1085.8 269.2 1086.7 278.8 1087.0 287.5 C1087.3 296.2 1087.0 304.6 1086.0 312.5 C1085.0 320.4 1082.3 329.4 1081.0 335.0 C1079.7 340.6 1077.2 344.2 1078.0 346.0 C1078.8 347.8 1082.8 345.5 1086.0 346.0 C1089.2 346.5 1094.3 347.0 1097.0 349.0 C1099.7 351.0 1101.2 353.7 1102.0 358.0 C1102.8 362.3 1102.7 366.8 1102.0 375.0 C1101.3 383.2 1100.0 396.7 1098.0 407.0 C1096.0 417.3 1093.3 428.7 1090.0 437.0 C1086.7 445.3 1082.0 453.8 1078.0 457.0 C1074.0 460.2 1068.7 453.8 1066.0 456.0 C1063.3 458.2 1063.5 461.5 1062.0 470.0 C1060.5 478.5 1058.8 492.0 1057.0 507.0 C1055.2 522.0 1052.3 544.5 1051.0 560.0 C1049.7 575.5 1049.3 589.7 1049.0 600.0 C1048.7 610.3 1049.0 618.3 1049.0 622.0 L1049.0 622.0 L1062.0 645.0 L1092.0 670.0 L1112.0 687.0 L1116.0 705.0 L1114.0 760.0 L1107.0 797.0 L1102.0 817.0 L1048.0 822.0 L1046.0 832.5 L1030.0 838.5 L1010.0 846.0 L992.0 853.0 L973.0 860.0 L955.0 866.0 L935.0 871.0 L914.0 874.0 L893.0 871.0 L873.0 867.0 L855.0 863.0 L830.0 855.0 L805.0 845.0 L780.0 832.5 L777.0 821.0 L727.5 817.0 L720.0 797.0 L712.5 760.0 L709.0 705.0 L712.5 690.0 L730.0 672.5 L762.5 645.0 L776.0 622.5 C776.0 618.8 776.2 610.4 776.0 600.0 C775.8 589.6 776.0 577.5 775.0 560.0 C774.0 542.5 772.0 511.3 770.0 495.0 C768.0 478.7 765.2 469.5 763.0 462.0 C760.8 454.5 760.5 452.5 757.0 450.0 C753.5 447.5 746.5 450.8 742.0 447.0 C737.5 443.2 733.7 435.7 730.0 427.0 C726.3 418.3 722.3 406.2 720.0 395.0 C717.7 383.8 716.2 368.2 716.0 360.0 C715.8 351.8 717.2 349.3 719.0 346.0 C720.8 342.7 723.8 341.2 727.0 340.0 C730.2 338.8 735.2 338.3 738.0 339.0 C740.8 339.7 743.7 344.2 744.0 344.0 C744.3 343.8 741.7 341.5 740.0 337.5 C738.3 333.5 735.5 326.2 734.0 320.0 C732.5 313.8 731.3 306.7 731.0 300.0 C730.7 293.3 731.2 287.5 732.0 280.0 C732.8 272.5 733.8 262.9 736.0 255.0 C738.2 247.1 741.0 240.4 745.0 232.5 C749.0 224.6 754.2 215.4 760.0 207.5 C765.8 199.6 772.5 192.5 780.0 185.0 C787.5 177.5 796.7 169.0 805.0 162.5 C813.3 156.0 821.7 151.0 830.0 146.0 C838.3 141.0 846.7 136.4 855.0 132.5 C863.3 128.6 870.2 124.8 880.0 122.5 C889.8 120.2 908.3 119.2 914.0 118.5Z" fill="#231d1a"/></g>
<path d="M914.0 128.0 C918.5 128.4 932.3 129.0 940.7 130.4 C949.2 131.8 956.7 134.0 964.6 136.6 C972.6 139.2 980.5 141.9 988.5 146.2 C996.4 150.4 1004.4 155.6 1012.4 161.9 C1020.3 168.3 1029.1 176.2 1036.2 184.4 C1043.4 192.5 1049.9 201.9 1055.3 210.6 C1060.8 219.4 1065.2 228.1 1068.7 236.9 C1072.2 245.6 1074.6 254.4 1076.3 263.1 C1078.1 271.9 1078.9 281.1 1079.2 289.4 C1079.5 297.8 1078.0 305.7 1078.3 313.3 C1078.6 320.9 1081.0 329.5 1081.0 335.0 C1081.0 340.5 1077.2 344.2 1078.0 346.0 C1078.8 347.8 1082.8 345.5 1086.0 346.0 C1089.2 346.5 1094.3 347.0 1097.0 349.0 C1099.7 351.0 1101.2 353.7 1102.0 358.0 C1102.8 362.3 1102.7 366.8 1102.0 375.0 C1101.3 383.2 1100.0 396.7 1098.0 407.0 C1096.0 417.3 1093.3 428.7 1090.0 437.0 C1086.7 445.3 1082.0 453.8 1078.0 457.0 C1074.0 460.2 1068.7 453.8 1066.0 456.0 C1063.3 458.2 1063.5 461.5 1062.0 470.0 C1060.5 478.5 1058.8 492.0 1057.0 507.0 C1055.2 522.0 1052.3 544.5 1051.0 560.0 C1049.7 575.5 1049.3 589.7 1049.0 600.0 C1048.7 610.3 1049.0 618.3 1049.0 622.0 L1049.0 622.0 L1062.0 645.0 L1092.0 670.0 L1112.0 687.0 L1116.0 705.0 L1114.0 760.0 L1107.0 797.0 L1102.0 817.0 L1048.0 822.0 L1046.0 832.5 L1030.0 838.5 L1010.0 846.0 L992.0 853.0 L973.0 860.0 L955.0 866.0 L935.0 871.0 L914.0 874.0 L893.0 871.0 L873.0 867.0 L855.0 863.0 L830.0 855.0 L805.0 845.0 L780.0 832.5 L777.0 821.0 L727.5 817.0 L720.0 797.0 L712.5 760.0 L709.0 705.0 L712.5 690.0 L730.0 672.5 L762.5 645.0 L776.0 622.5 C776.0 618.8 776.2 610.4 776.0 600.0 C775.8 589.6 776.0 577.5 775.0 560.0 C774.0 542.5 772.0 511.3 770.0 495.0 C768.0 478.7 765.2 469.5 763.0 462.0 C760.8 454.5 760.5 452.5 757.0 450.0 C753.5 447.5 746.5 450.8 742.0 447.0 C737.5 443.2 733.7 435.7 730.0 427.0 C726.3 418.3 722.3 406.2 720.0 395.0 C717.7 383.8 716.2 368.2 716.0 360.0 C715.8 351.8 717.2 349.3 719.0 346.0 C720.8 342.7 723.8 341.2 727.0 340.0 C730.2 338.8 735.2 338.3 738.0 339.0 C740.8 339.7 743.7 344.2 744.0 344.0 C744.3 343.8 740.3 341.4 740.0 337.5 C739.7 333.6 742.2 326.5 742.1 320.4 C742.0 314.4 739.6 307.7 739.2 301.4 C738.9 295.0 739.4 289.4 740.2 282.2 C741.0 275.1 741.9 265.9 744.0 258.4 C746.1 250.8 748.8 244.4 752.6 236.9 C756.4 229.3 761.4 220.6 766.9 213.0 C772.5 205.5 778.9 198.7 786.0 191.5 C793.2 184.4 801.9 176.2 809.9 170.0 C817.9 163.8 825.8 159.1 833.8 154.3 C841.7 149.5 849.7 145.1 857.7 141.4 C865.6 137.6 872.1 134.1 881.5 131.8 C890.9 129.6 908.6 128.7 914.0 128.0Z" fill="url(#skin)"/>
<g clip-path="url(#sil)">
<!-- overall inner edge darkening -->
<path d="M914.0 118.5 C918.7 118.9 933.2 119.5 942.0 121.0 C950.8 122.5 958.7 124.8 967.0 127.5 C975.3 130.2 983.7 133.1 992.0 137.5 C1000.3 141.9 1008.7 147.3 1017.0 154.0 C1025.3 160.7 1034.5 169.0 1042.0 177.5 C1049.5 186.0 1056.3 195.8 1062.0 205.0 C1067.7 214.2 1072.3 223.3 1076.0 232.5 C1079.7 241.7 1082.2 250.8 1084.0 260.0 C1085.8 269.2 1086.7 278.8 1087.0 287.5 C1087.3 296.2 1087.0 304.6 1086.0 312.5 C1085.0 320.4 1082.3 329.4 1081.0 335.0 C1079.7 340.6 1077.2 344.2 1078.0 346.0 C1078.8 347.8 1082.8 345.5 1086.0 346.0 C1089.2 346.5 1094.3 347.0 1097.0 349.0 C1099.7 351.0 1101.2 353.7 1102.0 358.0 C1102.8 362.3 1102.7 366.8 1102.0 375.0 C1101.3 383.2 1100.0 396.7 1098.0 407.0 C1096.0 417.3 1093.3 428.7 1090.0 437.0 C1086.7 445.3 1082.0 453.8 1078.0 457.0 C1074.0 460.2 1068.7 453.8 1066.0 456.0 C1063.3 458.2 1063.5 461.5 1062.0 470.0 C1060.5 478.5 1058.8 492.0 1057.0 507.0 C1055.2 522.0 1052.3 544.5 1051.0 560.0 C1049.7 575.5 1049.3 589.7 1049.0 600.0 C1048.7 610.3 1049.0 618.3 1049.0 622.0 L1049.0 622.0 L1062.0 645.0 L1092.0 670.0 L1112.0 687.0 L1116.0 705.0 L1114.0 760.0 L1107.0 797.0 L1102.0 817.0 L1048.0 822.0 L1046.0 832.5 L1030.0 838.5 L1010.0 846.0 L992.0 853.0 L973.0 860.0 L955.0 866.0 L935.0 871.0 L914.0 874.0 L893.0 871.0 L873.0 867.0 L855.0 863.0 L830.0 855.0 L805.0 845.0 L780.0 832.5 L777.0 821.0 L727.5 817.0 L720.0 797.0 L712.5 760.0 L709.0 705.0 L712.5 690.0 L730.0 672.5 L762.5 645.0 L776.0 622.5 C776.0 618.8 776.2 610.4 776.0 600.0 C775.8 589.6 776.0 577.5 775.0 560.0 C774.0 542.5 772.0 511.3 770.0 495.0 C768.0 478.7 765.2 469.5 763.0 462.0 C760.8 454.5 760.5 452.5 757.0 450.0 C753.5 447.5 746.5 450.8 742.0 447.0 C737.5 443.2 733.7 435.7 730.0 427.0 C726.3 418.3 722.3 406.2 720.0 395.0 C717.7 383.8 716.2 368.2 716.0 360.0 C715.8 351.8 717.2 349.3 719.0 346.0 C720.8 342.7 723.8 341.2 727.0 340.0 C730.2 338.8 735.2 338.3 738.0 339.0 C740.8 339.7 743.7 344.2 744.0 344.0 C744.3 343.8 741.7 341.5 740.0 337.5 C738.3 333.5 735.5 326.2 734.0 320.0 C732.5 313.8 731.3 306.7 731.0 300.0 C730.7 293.3 731.2 287.5 732.0 280.0 C732.8 272.5 733.8 262.9 736.0 255.0 C738.2 247.1 741.0 240.4 745.0 232.5 C749.0 224.6 754.2 215.4 760.0 207.5 C765.8 199.6 772.5 192.5 780.0 185.0 C787.5 177.5 796.7 169.0 805.0 162.5 C813.3 156.0 821.7 151.0 830.0 146.0 C838.3 141.0 846.7 136.4 855.0 132.5 C863.3 128.6 870.2 124.8 880.0 122.5 C889.8 120.2 908.3 119.2 914.0 118.5Z" fill="none" stroke="#4a2a20" stroke-width="22" filter="url(#b6)" opacity=".4"/>
<g mask="url(#upper)"><path d="M914.0 118.5 C918.7 118.9 933.2 119.5 942.0 121.0 C950.8 122.5 958.7 124.8 967.0 127.5 C975.3 130.2 983.7 133.1 992.0 137.5 C1000.3 141.9 1008.7 147.3 1017.0 154.0 C1025.3 160.7 1034.5 169.0 1042.0 177.5 C1049.5 186.0 1056.3 195.8 1062.0 205.0 C1067.7 214.2 1072.3 223.3 1076.0 232.5 C1079.7 241.7 1082.2 250.8 1084.0 260.0 C1085.8 269.2 1086.7 278.8 1087.0 287.5 C1087.3 296.2 1087.0 304.6 1086.0 312.5 C1085.0 320.4 1082.3 329.4 1081.0 335.0 C1079.7 340.6 1077.2 344.2 1078.0 346.0 C1078.8 347.8 1082.8 345.5 1086.0 346.0 C1089.2 346.5 1094.3 347.0 1097.0 349.0 C1099.7 351.0 1101.2 353.7 1102.0 358.0 C1102.8 362.3 1102.7 366.8 1102.0 375.0 C1101.3 383.2 1100.0 396.7 1098.0 407.0 C1096.0 417.3 1093.3 428.7 1090.0 437.0 C1086.7 445.3 1082.0 453.8 1078.0 457.0 C1074.0 460.2 1068.7 453.8 1066.0 456.0 C1063.3 458.2 1063.5 461.5 1062.0 470.0 C1060.5 478.5 1058.8 492.0 1057.0 507.0 C1055.2 522.0 1052.3 544.5 1051.0 560.0 C1049.7 575.5 1049.3 589.7 1049.0 600.0 C1048.7 610.3 1049.0 618.3 1049.0 622.0 L1049.0 622.0 L1062.0 645.0 L1092.0 670.0 L1112.0 687.0 L1116.0 705.0 L1114.0 760.0 L1107.0 797.0 L1102.0 817.0 L1048.0 822.0 L1046.0 832.5 L1030.0 838.5 L1010.0 846.0 L992.0 853.0 L973.0 860.0 L955.0 866.0 L935.0 871.0 L914.0 874.0 L893.0 871.0 L873.0 867.0 L855.0 863.0 L830.0 855.0 L805.0 845.0 L780.0 832.5 L777.0 821.0 L727.5 817.0 L720.0 797.0 L712.5 760.0 L709.0 705.0 L712.5 690.0 L730.0 672.5 L762.5 645.0 L776.0 622.5 C776.0 618.8 776.2 610.4 776.0 600.0 C775.8 589.6 776.0 577.5 775.0 560.0 C774.0 542.5 772.0 511.3 770.0 495.0 C768.0 478.7 765.2 469.5 763.0 462.0 C760.8 454.5 760.5 452.5 757.0 450.0 C753.5 447.5 746.5 450.8 742.0 447.0 C737.5 443.2 733.7 435.7 730.0 427.0 C726.3 418.3 722.3 406.2 720.0 395.0 C717.7 383.8 716.2 368.2 716.0 360.0 C715.8 351.8 717.2 349.3 719.0 346.0 C720.8 342.7 723.8 341.2 727.0 340.0 C730.2 338.8 735.2 338.3 738.0 339.0 C740.8 339.7 743.7 344.2 744.0 344.0 C744.3 343.8 741.7 341.5 740.0 337.5 C738.3 333.5 735.5 326.2 734.0 320.0 C732.5 313.8 731.3 306.7 731.0 300.0 C730.7 293.3 731.2 287.5 732.0 280.0 C732.8 272.5 733.8 262.9 736.0 255.0 C738.2 247.1 741.0 240.4 745.0 232.5 C749.0 224.6 754.2 215.4 760.0 207.5 C765.8 199.6 772.5 192.5 780.0 185.0 C787.5 177.5 796.7 169.0 805.0 162.5 C813.3 156.0 821.7 151.0 830.0 146.0 C838.3 141.0 846.7 136.4 855.0 132.5 C863.3 128.6 870.2 124.8 880.0 122.5 C889.8 120.2 908.3 119.2 914.0 118.5Z" fill="none" stroke="#452619" stroke-width="24" filter="url(#b6)" opacity=".5"/></g>
<!-- bottom orange tint -->
<ellipse cx="914" cy="885" rx="200" ry="50" fill="#844328" filter="url(#b20)" opacity=".45"/>
<!-- neck centre slightly lighter upper part -->
<ellipse cx="914" cy="675" rx="120" ry="50" fill="#7a4737" filter="url(#b20)" opacity=".85"/>
<!-- face lighter centre -->
<ellipse cx="914" cy="410" rx="120" ry="190" fill="#7c4736" filter="url(#b20)" opacity=".95"/>
<ellipse cx="914" cy="275" rx="90" ry="45" fill="#84503f" filter="url(#b20)" opacity=".9"/>
<ellipse cx="840" cy="450" rx="52" ry="70" fill="#80493a" filter="url(#b20)" opacity=".85"/>
<ellipse cx="990" cy="450" rx="52" ry="70" fill="#80493a" filter="url(#b20)" opacity=".85"/>
<!-- under-jaw shadow -->
<path d="M774 520 Q786 556 824 580 Q868 610 914 626 Q960 610 1004 580 Q1042 556 1052 520 L1052 580 Q1010 615 914 640 Q818 615 774 580 Z" fill="#552f24" filter="url(#b6)" opacity=".6"/>
<path d="M835 590 L880 612 L875 640 Z" fill="#55302a" filter="url(#b3)" opacity=".5"/>
<!-- cheek side shadows (narrow) -->
<path d="M756 345 Q760 450 782 530 Q800 560 822 575 Q786 520 770 345Z" fill="#4c2a21" filter="url(#b6)" opacity=".5"/>
<path d="M1072 345 Q1068 450 1046 530 Q1028 560 1006 575 Q1042 520 1058 345Z" fill="#4c2a21" filter="url(#b6)" opacity=".5"/>
<!-- ears -->
<path d="M757 350 Q735 335 722 345 Q714 365 722 400 Q732 435 748 448 L760 452 Z" fill="#623729"/>
<path d="M750 362 Q734 352 729 364 Q728 395 741 423 Q748 433 752 420 Z" fill="#432419" filter="url(#b3)"/>
<path d="M1070 350 Q1092 340 1100 352 Q1106 370 1098 405 Q1090 440 1076 456 L1062 458 Z" fill="#623729"/>
<path d="M1077 364 Q1091 354 1095 366 Q1097 395 1085 426 Q1078 438 1074 424 Z" fill="#432419" filter="url(#b3)"/>
<!-- chin highlight -->
<ellipse cx="914" cy="574" rx="34" ry="12" fill="#8a523f" filter="url(#b6)" opacity=".85"/>
<!-- beard: crescent along the jaw -->
<path d="M818 558 Q834 596 880 615 Q914 626 948 615 Q994 596 1010 558 Q990 580 952 581 Q914 573 876 581 Q838 580 818 558 Z" fill="#2c1812" filter="url(#b3)" opacity=".82"/>
<path d="M850 592 Q870 613 914 622 Q958 613 978 592 Q950 590 914 592 Q880 590 850 592Z" fill="#241510" filter="url(#b3)" opacity=".85"/>
<path d="M818 558 Q834 596 880 615 Q914 626 948 615 Q994 596 1010 558 Q990 580 952 581 Q914 573 876 581 Q838 580 818 558 Z" fill="#000" filter="url(#bn)"/>
<!-- moustache shadow -->
<path d="M852 500 Q914 468 976 500 Q914 486 852 500Z" fill="#4e2c22" filter="url(#b3)" opacity=".55"/>
<!-- nose -->
<ellipse cx="914" cy="420" rx="22" ry="34" fill="#93593f" filter="url(#b12)" opacity=".9"/>
<ellipse cx="914" cy="432" rx="13" ry="5" fill="#c8957c" filter="url(#b3)" opacity=".8"/>
<path d="M866 442 Q864 422 880 410 Q875 440 884 454 Q870 454 866 442Z" fill="#4a281d" filter="url(#b3)" opacity=".65"/>
<path d="M961 442 Q963 422 947 410 Q952 440 943 454 Q957 454 961 442Z" fill="#4a281d" filter="url(#b3)" opacity=".65"/>
<path d="M870 446 Q885 440 902 449 Q914 456 926 449 Q943 440 958 446 Q950 458 930 456 Q914 462 898 456 Q880 458 870 446Z" fill="#3a1f17" filter="url(#b1)" opacity=".85"/>
<ellipse cx="887" cy="448" rx="8" ry="3.2" fill="#1d0f0b" filter="url(#b1)"/>
<ellipse cx="941" cy="448" rx="8" ry="3.2" fill="#1d0f0b" filter="url(#b1)"/>
<!-- eye sockets -->
<ellipse cx="845" cy="356" rx="42" ry="17" fill="#4a2a20" filter="url(#b6)" opacity=".7"/>
<ellipse cx="986" cy="360" rx="42" ry="17" fill="#4a2a20" filter="url(#b6)" opacity=".7"/>
<!-- eyes -->
<clipPath id="eyeL"><path d="M818 360 Q826 351 840 349.5 Q856 349 866 354 Q871 358 870 362 Q862 367 848 369 Q832 369.5 822 365 Z"/></clipPath>
<clipPath id="eyeR"><path d="M961 366 Q968 358 982 356 Q998 355 1008 361 Q1012 365 1011 368 Q1002 372 990 373 Q974 373.5 965 370 Z"/></clipPath>
<path d="M812 361 Q824 346 842 345 Q860 345 872 355 Q876 360 873 364 Q862 371 846 372.5 Q828 372 816 366 Z" fill="#3a2019" filter="url(#b1)" opacity=".85"/>
<g clip-path="url(#eyeL)"><rect x="810" y="340" width="70" height="40" fill="#e6dcc2"/><circle cx="845.5" cy="358.5" r="14" fill="#4a2a23"/><circle cx="845.5" cy="358.5" r="12.3" fill="#76493f"/><circle cx="845.5" cy="358.5" r="6.2" fill="#0a0606"/><rect x="810" y="340" width="70" height="12" fill="#000" opacity=".22"/></g>
<path d="M955 367 Q966 353 984 351.5 Q1002 351 1014 361 Q1018 366 1015 370 Q1004 376 990 377 Q970 377 958 371 Z" fill="#3a2019" filter="url(#b1)" opacity=".85"/>
<g clip-path="url(#eyeR)"><rect x="950" y="345" width="70" height="40" fill="#e6dcc2"/><circle cx="987" cy="364" r="14" fill="#4a2a23"/><circle cx="987" cy="364" r="12.3" fill="#76493f"/><circle cx="987.5" cy="364" r="6.2" fill="#0a0606"/><rect x="950" y="345" width="70" height="13" fill="#000" opacity=".22"/></g>
<path d="M806 362 Q822 346 843 344 Q862 344 874 356" fill="none" stroke="#2a1611" stroke-width="2.2" filter="url(#b1)"/>
<path d="M951 368 Q966 352 985 350.5 Q1004 350 1017 362" fill="none" stroke="#2a1611" stroke-width="2.2" filter="url(#b1)"/>
<!-- brows -->
<path d="M792 332 Q800 319 822 318 Q856 321 880 334 Q890 341 892 347 Q880 347 868 343 Q840 336 812 335 Q798 336 792 332Z" fill="#2c1b15" filter="url(#b1)" opacity=".92"/>
<path d="M937 344 Q945 332 965 325 Q1000 316 1030 324 Q1040 330 1039 339 Q1028 340 1012 336 Q985 335 962 343 Q946 350 937 344Z" fill="#2c1b15" filter="url(#b1)" opacity=".92"/>
<!-- lips -->
<ellipse cx="914" cy="470" rx="38" ry="12" fill="#5a3226" filter="url(#b6)" opacity=".55"/>
<path d="M855 510 Q875 500 895 486 Q905 482.5 914 487 Q923 482.5 933 486 Q953 500 974 510 Q940 506 914 508.5 Q888 506 855 510 Z" fill="#6a3d35" filter="url(#b1)"/>
<path d="M863 510.5 Q914 506 969 510.5 Q960 534 936 543 Q914 547.5 892 543 Q870 534 863 510.5Z" fill="#a0685f" filter="url(#b1)"/>
<ellipse cx="914" cy="527" rx="32" ry="10" fill="#b9827a" filter="url(#b3)" opacity=".75"/>
<path d="M853 510 Q885 505 914 508 Q943 505 976 510" fill="none" stroke="#3f211b" stroke-width="2.2" filter="url(#b1)"/>
<ellipse cx="853" cy="510" rx="5" ry="4" fill="#4a281f" filter="url(#b3)" opacity=".7"/><ellipse cx="976" cy="510" rx="5" ry="4" fill="#4a281f" filter="url(#b3)" opacity=".7"/>
<ellipse cx="914" cy="553" rx="34" ry="5" fill="#4e2c22" filter="url(#b3)" opacity=".6"/>
<!-- hair -->
<path d="M914.0 118.5 C924.3 118.2 933.2 119.5 942.0 121.0 C950.8 122.5 958.7 124.8 967.0 127.5 C975.3 130.2 983.7 133.1 992.0 137.5 C1000.3 141.9 1008.7 147.3 1017.0 154.0 C1025.3 160.7 1034.5 169.0 1042.0 177.5 C1049.5 186.0 1056.3 195.8 1062.0 205.0 C1067.7 214.2 1072.3 223.3 1076.0 232.5 C1079.7 241.7 1082.2 250.8 1084.0 260.0 C1085.8 269.2 1086.7 278.8 1087.0 287.5 C1087.3 296.2 1087.0 304.6 1086.0 312.5 C1085.0 320.4 1082.7 328.8 1081.0 335.0 C1079.3 341.2 1077.8 350.8 1076.0 350.0 C1074.2 349.2 1072.3 338.3 1070.0 330.0 C1067.7 321.7 1065.0 308.3 1062.0 300.0 C1059.0 291.7 1055.7 286.3 1052.0 280.0 C1048.3 273.7 1043.3 267.8 1040.0 262.0 C1036.7 256.2 1035.3 250.7 1032.0 245.0 C1028.7 239.3 1025.3 233.0 1020.0 228.0 C1014.7 223.0 1008.8 218.8 1000.0 215.0 C991.2 211.2 977.0 207.3 967.0 205.0 C957.0 202.7 948.8 201.8 940.0 201.0 C931.2 200.2 922.7 200.0 914.0 200.0 C905.3 200.0 897.8 200.2 888.0 201.0 C878.2 201.8 865.5 202.7 855.0 205.0 C844.5 207.3 833.2 210.8 825.0 215.0 C816.8 219.2 810.8 224.8 806.0 230.0 C801.2 235.2 799.0 240.3 796.0 246.0 C793.0 251.7 791.5 258.0 788.0 264.0 C784.5 270.0 779.0 276.0 775.0 282.0 C771.0 288.0 767.0 292.8 764.0 300.0 C761.0 307.2 759.0 316.7 757.0 325.0 C755.0 333.3 754.2 346.8 752.0 350.0 C749.8 353.2 746.0 346.1 744.0 344.0 C742.0 341.9 741.7 341.5 740.0 337.5 C738.3 333.5 735.5 326.2 734.0 320.0 C732.5 313.8 731.3 306.7 731.0 300.0 C730.7 293.3 731.2 287.5 732.0 280.0 C732.8 272.5 733.8 262.9 736.0 255.0 C738.2 247.1 741.0 240.4 745.0 232.5 C749.0 224.6 754.2 215.4 760.0 207.5 C765.8 199.6 772.5 192.5 780.0 185.0 C787.5 177.5 796.7 169.0 805.0 162.5 C813.3 156.0 821.7 151.0 830.0 146.0 C838.3 141.0 846.7 136.4 855.0 132.5 C863.3 128.6 870.2 124.8 880.0 122.5 C889.8 120.2 903.7 118.8 914.0 118.5Z" fill="#3a251d" filter="url(#b12)" opacity=".9"/>
<path d="M914.0 118.5 C924.3 118.2 933.2 119.5 942.0 121.0 C950.8 122.5 958.7 124.8 967.0 127.5 C975.3 130.2 983.7 133.1 992.0 137.5 C1000.3 141.9 1008.7 147.3 1017.0 154.0 C1025.3 160.7 1034.5 169.0 1042.0 177.5 C1049.5 186.0 1056.3 195.8 1062.0 205.0 C1067.7 214.2 1072.3 223.3 1076.0 232.5 C1079.7 241.7 1082.2 250.8 1084.0 260.0 C1085.8 269.2 1086.7 278.8 1087.0 287.5 C1087.3 296.2 1087.0 304.6 1086.0 312.5 C1085.0 320.4 1082.7 328.8 1081.0 335.0 C1079.3 341.2 1077.8 350.8 1076.0 350.0 C1074.2 349.2 1072.3 338.3 1070.0 330.0 C1067.7 321.7 1065.0 308.3 1062.0 300.0 C1059.0 291.7 1055.7 286.3 1052.0 280.0 C1048.3 273.7 1043.3 267.8 1040.0 262.0 C1036.7 256.2 1035.3 250.7 1032.0 245.0 C1028.7 239.3 1025.3 233.0 1020.0 228.0 C1014.7 223.0 1008.8 218.8 1000.0 215.0 C991.2 211.2 977.0 207.3 967.0 205.0 C957.0 202.7 948.8 201.8 940.0 201.0 C931.2 200.2 922.7 200.0 914.0 200.0 C905.3 200.0 897.8 200.2 888.0 201.0 C878.2 201.8 865.5 202.7 855.0 205.0 C844.5 207.3 833.2 210.8 825.0 215.0 C816.8 219.2 810.8 224.8 806.0 230.0 C801.2 235.2 799.0 240.3 796.0 246.0 C793.0 251.7 791.5 258.0 788.0 264.0 C784.5 270.0 779.0 276.0 775.0 282.0 C771.0 288.0 767.0 292.8 764.0 300.0 C761.0 307.2 759.0 316.7 757.0 325.0 C755.0 333.3 754.2 346.8 752.0 350.0 C749.8 353.2 746.0 346.1 744.0 344.0 C742.0 341.9 741.7 341.5 740.0 337.5 C738.3 333.5 735.5 326.2 734.0 320.0 C732.5 313.8 731.3 306.7 731.0 300.0 C730.7 293.3 731.2 287.5 732.0 280.0 C732.8 272.5 733.8 262.9 736.0 255.0 C738.2 247.1 741.0 240.4 745.0 232.5 C749.0 224.6 754.2 215.4 760.0 207.5 C765.8 199.6 772.5 192.5 780.0 185.0 C787.5 177.5 796.7 169.0 805.0 162.5 C813.3 156.0 821.7 151.0 830.0 146.0 C838.3 141.0 846.7 136.4 855.0 132.5 C863.3 128.6 870.2 124.8 880.0 122.5 C889.8 120.2 903.7 118.8 914.0 118.5Z" fill="#3c261e" filter="url(#b6)"/>
<path d="M914.0 118.5 C924.3 118.2 933.2 119.5 942.0 121.0 C950.8 122.5 958.7 124.8 967.0 127.5 C975.3 130.2 983.7 133.1 992.0 137.5 C1000.3 141.9 1008.7 147.3 1017.0 154.0 C1025.3 160.7 1034.5 169.0 1042.0 177.5 C1049.5 186.0 1056.3 195.8 1062.0 205.0 C1067.7 214.2 1072.3 223.3 1076.0 232.5 C1079.7 241.7 1082.2 250.8 1084.0 260.0 C1085.8 269.2 1086.7 278.8 1087.0 287.5 C1087.3 296.2 1087.0 304.6 1086.0 312.5 C1085.0 320.4 1082.7 328.8 1081.0 335.0 C1079.3 341.2 1077.8 350.8 1076.0 350.0 C1074.2 349.2 1072.3 338.3 1070.0 330.0 C1067.7 321.7 1065.0 308.3 1062.0 300.0 C1059.0 291.7 1055.7 286.3 1052.0 280.0 C1048.3 273.7 1043.3 267.8 1040.0 262.0 C1036.7 256.2 1035.3 250.7 1032.0 245.0 C1028.7 239.3 1025.3 233.0 1020.0 228.0 C1014.7 223.0 1008.8 218.8 1000.0 215.0 C991.2 211.2 977.0 207.3 967.0 205.0 C957.0 202.7 948.8 201.8 940.0 201.0 C931.2 200.2 922.7 200.0 914.0 200.0 C905.3 200.0 897.8 200.2 888.0 201.0 C878.2 201.8 865.5 202.7 855.0 205.0 C844.5 207.3 833.2 210.8 825.0 215.0 C816.8 219.2 810.8 224.8 806.0 230.0 C801.2 235.2 799.0 240.3 796.0 246.0 C793.0 251.7 791.5 258.0 788.0 264.0 C784.5 270.0 779.0 276.0 775.0 282.0 C771.0 288.0 767.0 292.8 764.0 300.0 C761.0 307.2 759.0 316.7 757.0 325.0 C755.0 333.3 754.2 346.8 752.0 350.0 C749.8 353.2 746.0 346.1 744.0 344.0 C742.0 341.9 741.7 341.5 740.0 337.5 C738.3 333.5 735.5 326.2 734.0 320.0 C732.5 313.8 731.3 306.7 731.0 300.0 C730.7 293.3 731.2 287.5 732.0 280.0 C732.8 272.5 733.8 262.9 736.0 255.0 C738.2 247.1 741.0 240.4 745.0 232.5 C749.0 224.6 754.2 215.4 760.0 207.5 C765.8 199.6 772.5 192.5 780.0 185.0 C787.5 177.5 796.7 169.0 805.0 162.5 C813.3 156.0 821.7 151.0 830.0 146.0 C838.3 141.0 846.7 136.4 855.0 132.5 C863.3 128.6 870.2 124.8 880.0 122.5 C889.8 120.2 903.7 118.8 914.0 118.5Z" fill="#231d1a" stroke="#231d1a" stroke-width="3" filter="url(#b1)"/>
<path d="M914.0 118.5 C924.3 118.2 933.2 119.5 942.0 121.0 C950.8 122.5 958.7 124.8 967.0 127.5 C975.3 130.2 983.7 133.1 992.0 137.5 C1000.3 141.9 1008.7 147.3 1017.0 154.0 C1025.3 160.7 1034.5 169.0 1042.0 177.5 C1049.5 186.0 1056.3 195.8 1062.0 205.0 C1067.7 214.2 1072.3 223.3 1076.0 232.5 C1079.7 241.7 1082.2 250.8 1084.0 260.0 C1085.8 269.2 1086.7 278.8 1087.0 287.5 C1087.3 296.2 1087.0 304.6 1086.0 312.5 C1085.0 320.4 1082.7 328.8 1081.0 335.0 C1079.3 341.2 1077.8 350.8 1076.0 350.0 C1074.2 349.2 1072.3 338.3 1070.0 330.0 C1067.7 321.7 1065.0 308.3 1062.0 300.0 C1059.0 291.7 1055.7 286.3 1052.0 280.0 C1048.3 273.7 1043.3 267.8 1040.0 262.0 C1036.7 256.2 1035.3 250.7 1032.0 245.0 C1028.7 239.3 1025.3 233.0 1020.0 228.0 C1014.7 223.0 1008.8 218.8 1000.0 215.0 C991.2 211.2 977.0 207.3 967.0 205.0 C957.0 202.7 948.8 201.8 940.0 201.0 C931.2 200.2 922.7 200.0 914.0 200.0 C905.3 200.0 897.8 200.2 888.0 201.0 C878.2 201.8 865.5 202.7 855.0 205.0 C844.5 207.3 833.2 210.8 825.0 215.0 C816.8 219.2 810.8 224.8 806.0 230.0 C801.2 235.2 799.0 240.3 796.0 246.0 C793.0 251.7 791.5 258.0 788.0 264.0 C784.5 270.0 779.0 276.0 775.0 282.0 C771.0 288.0 767.0 292.8 764.0 300.0 C761.0 307.2 759.0 316.7 757.0 325.0 C755.0 333.3 754.2 346.8 752.0 350.0 C749.8 353.2 746.0 346.1 744.0 344.0 C742.0 341.9 741.7 341.5 740.0 337.5 C738.3 333.5 735.5 326.2 734.0 320.0 C732.5 313.8 731.3 306.7 731.0 300.0 C730.7 293.3 731.2 287.5 732.0 280.0 C732.8 272.5 733.8 262.9 736.0 255.0 C738.2 247.1 741.0 240.4 745.0 232.5 C749.0 224.6 754.2 215.4 760.0 207.5 C765.8 199.6 772.5 192.5 780.0 185.0 C787.5 177.5 796.7 169.0 805.0 162.5 C813.3 156.0 821.7 151.0 830.0 146.0 C838.3 141.0 846.7 136.4 855.0 132.5 C863.3 128.6 870.2 124.8 880.0 122.5 C889.8 120.2 903.7 118.8 914.0 118.5Z" fill="#000" filter="url(#hn)"/>
</g>
</g>
</svg>
<div class="t" style="left:187px;top:68px;color:#fff;font-size:11px;">Front Ortho</div>
<div class="t" style="left:237px;top:894px;color:#fff;font-size:11px;">(1) head_190483_0_head</div>
<svg style="left:188px;top:852px" width="44" height="40" viewBox="0 0 44 40"><path d="M4.5 11 L4.5 36" stroke="#2525d0" stroke-width="1.6"/><path d="M4 36.5 L30 36.5" stroke="#c02020" stroke-width="1.6"/><text x="6" y="9" font-size="8" fill="#3a3ad8" font-family="'DejaVu Sans',sans-serif">z</text><text x="33" y="34" font-size="8" fill="#a02828" font-family="'DejaVu Sans',sans-serif">x</text></svg>
<div style="left:1644px;top:79px;width:14px;height:14px;background:#2f2f2f;border-radius:3px"></div>
<svg style="left:1647px;top:82px" width="8" height="8" viewBox="0 0 8 8"><path d="M4 0.5 V7.5 M0.5 4 H7.5" stroke="#777" stroke-width="2"/></svg>
<svg style="left:1646px;top:58px" width="12" height="12" viewBox="0 0 12 12"><path d="M1 0 L12 11 M5 0 L12 7 M9 0 L12 3" stroke="rgba(255,255,255,.16)" stroke-width="1" fill="none"/><path d="M0 0 L12 12 M4 0 L12 8 M8 0 L12 4" stroke="rgba(0,0,0,.42)" stroke-width="1" fill="none"/></svg>
<!-- v3dheader -->
<div style="left:8px;top:913px;width:1651px;height:28px;background:#727272;border-top:1px solid #5e5e5e;border-bottom:1px solid #1f1f1f"></div>
<svg style="left:8px;top:928px" width="12" height="12" viewBox="0 0 12 12"><path d="M0 1 L11 12 M0 5 L7 12 M0 9 L3 12" stroke="rgba(255,255,255,.16)" stroke-width="1" fill="none"/><path d="M0 0 L12 12 M0 4 L8 12 M0 8 L4 12" stroke="rgba(0,0,0,.42)" stroke-width="1" fill="none"/></svg>
<div class="dk" style="left:17px;top:917px;width:30px;height:20px;"></div>
<svg style="left:22px;top:919px" width="15" height="16" viewBox="0 0 15 16"><path d="M1 3.5 L7 1 L14 3.5 L14 12 L7 15 L1 12 Z" fill="#e9e9e9" stroke="#444" stroke-width=".8"/><path d="M7 6 L14 3.5 L14 12 L7 15 Z" fill="#9a9a9a"/><path d="M1 3.5 L7 6 L7 15" fill="none" stroke="#555" stroke-width=".8"/></svg>
<svg style="left:38px;top:921px" width="7" height="13" viewBox="0 0 7 13"><path d="M3.5 0.5 L6.5 5 L0.5 5 Z M3.5 12.5 L6.5 8 L0.5 8 Z" fill="#a8a8a8"/></svg>
<div class="t" style="left:60px;top:922px;color:#000;font-size:11px;">View</div>
<div class="t" style="left:104px;top:922px;color:#000;font-size:11px;">Select</div>
<div class="t" style="left:155px;top:922px;color:#000;font-size:11px;">Add</div>
<div class="t" style="left:194px;top:922px;color:#000;font-size:11px;">Object</div>
<div class="dk" style="left:240px;top:917px;width:113px;height:20px;"><span style="left:23px">Object Mode</span></div>
<svg style="left:245px;top:920px" width="14" height="14" viewBox="0 0 14 14"><path d="M1 3.5 L7 1 L13 3.5 L13 10.5 L7 13.5 L1 10.5 Z" fill="#f0a040" stroke="#7a4a10" stroke-width=".8"/><path d="M7 6 L13 3.5 L13 10.5 L7 13.5 Z" fill="#c87818"/><path d="M1 3.5 L7 6 L13 3.5 L7 1Z" fill="#f8c880"/></svg>
<svg style="left:343px;top:921px" width="7" height="13" viewBox="0 0 7 13"><path d="M3.5 0.5 L6.5 5 L0.5 5 Z M3.5 12.5 L6.5 8 L0.5 8 Z" fill="#a8a8a8"/></svg>
<div class="dk" style="left:358px;top:917px;width:35px;height:20px;"></div>
<svg style="left:362px;top:920px" width="14" height="14" viewBox="0 0 14 14"><circle cx="7" cy="7" r="6.3" fill="#d83030" stroke="#fff" stroke-width="1"/><circle cx="7" cy="7" r="2.6" fill="#fff"/><path d="M7 .7 V4 M7 10 V13.3 M.7 7 H4 M10 7 H13.3" stroke="#fff" stroke-width="1.6"/></svg>
<svg style="left:383px;top:921px" width="7" height="13" viewBox="0 0 7 13"><path d="M3.5 0.5 L6.5 5 L0.5 5 Z M3.5 12.5 L6.5 8 L0.5 8 Z" fill="#a8a8a8"/></svg>
<div style="left:398px;top:917px;width:36px;height:20px;border:1px solid #1e1e1e;border-radius:4px 0 0 4px;background:linear-gradient(#3b3b3b,#575757);box-shadow:0 1px 0 rgba(255,255,255,.1);"></div>
<svg style="left:401px;top:919px" width="16" height="16" viewBox="0 0 16 16"><circle cx="5.5" cy="5.5" r="4" fill="#dfe8f5" stroke="#333" stroke-width=".8"/><circle cx="10.5" cy="10.5" r="4" fill="#5a8ad8" stroke="#223" stroke-width=".8"/><circle cx="8" cy="8" r="1.4" fill="#fff"/></svg>
<svg style="left:423px;top:921px" width="7" height="13" viewBox="0 0 7 13"><path d="M3.5 0.5 L6.5 5 L0.5 5 Z M3.5 12.5 L6.5 8 L0.5 8 Z" fill="#a8a8a8"/></svg>
<div style="left:433px;top:917px;width:20px;height:20px;border:1px solid #2e2e2e;border-radius:0 4px 4px 0;background:linear-gradient(#999,#8a8a8a);box-shadow:0 1px 0 rgba(255,255,255,.1);"></div>
<svg style="left:435px;top:919px" width="16" height="16" viewBox="0 0 16 16"><circle cx="3" cy="3" r="1.4" fill="none" stroke="#222" stroke-width=".9"/><circle cx="8" cy="3" r="1.4" fill="none" stroke="#222" stroke-width=".9"/><circle cx="13" cy="3" r="1.4" fill="none" stroke="#222" stroke-width=".9"/><path d="M1 10 L5 6.5 L5 9 L11 9 L11 6.5 L15 10 L11 13.5 L11 11 L5 11 L5 13.5 Z" fill="#eee" stroke="#222" stroke-width=".8"/></svg>
<div style="left:458px;top:917px;width:21px;height:20px;border:1px solid #1e1e1e;border-radius:4px 0 0 4px;background:linear-gradient(#3b3b3b,#575757);box-shadow:0 1px 0 rgba(255,255,255,.1);background:linear-gradient(#505050,#626262)"></div>
<svg style="left:460px;top:919px" width="16" height="16" viewBox="0 0 16 16"><path d="M8 9 V1" stroke="#2a2ad0" stroke-width="1.8"/><path d="M8 9 L1.5 14.5" stroke="#d02020" stroke-width="1.8"/><path d="M8 9 L14.5 14.5" stroke="#20a020" stroke-width="1.8"/></svg>
<div style="left:478px;top:917px;width:20px;height:20px;border:1px solid #2e2e2e;border-radius:0;background:linear-gradient(#4a6fb0,#6b90d2);box-shadow:0 1px 0 rgba(255,255,255,.1);"></div>
<svg style="left:480px;top:919px" width="16" height="16" viewBox="0 0 16 16"><path d="M2 14 L10 6 L8 4 L14.5 1.5 L12 8 L10 6" fill="#d8e4f8" stroke="#1a2a50" stroke-width="1"/></svg>
<div style="left:497px;top:917px;width:21px;height:20px;border:1px solid #1e1e1e;border-radius:0;background:linear-gradient(#3b3b3b,#575757);box-shadow:0 1px 0 rgba(255,255,255,.1);"></div>
<svg style="left:500px;top:919px" width="16" height="16" viewBox="0 0 16 16"><path d="M2 14 Q3 4 13 2" fill="none" stroke="#5a7ab8" stroke-width="1.8"/></svg>
<div style="left:517px;top:917px;width:21px;height:20px;border:1px solid #1e1e1e;border-radius:0;background:linear-gradient(#3b3b3b,#575757);box-shadow:0 1px 0 rgba(255,255,255,.1);"></div>
<svg style="left:520px;top:919px" width="16" height="16" viewBox="0 0 16 16"><path d="M2 14 L9 6" stroke="#5a7ab8" stroke-width="1.8"/><rect x="8" y="2" width="6" height="5" fill="#5a7ab8"/></svg>
<div class="dk" style="left:537px;top:917px;width:73px;height:20px;border-radius:0 4px 4px 0"><span style="">Global</span></div>
<svg style="left:600px;top:921px" width="7" height="13" viewBox="0 0 7 13"><path d="M3.5 0.5 L6.5 5 L0.5 5 Z M3.5 12.5 L6.5 8 L0.5 8 Z" fill="#a8a8a8"/></svg>
<div style="left:615px;top:917px;width:51px;height:20px;border:1px solid #2e2e2e;border-radius:4px;background:linear-gradient(#9e9e9e,#8a8a8a);overflow:hidden"><div style="left:9px;top:-1px;width:1px;height:20px;background:#3a3a3a"></div><div style="left:19px;top:-1px;width:1px;height:20px;background:#3a3a3a"></div><div style="left:29px;top:-1px;width:1px;height:20px;background:#3a3a3a"></div><div style="left:39px;top:-1px;width:1px;height:20px;background:#3a3a3a"></div><div style="left:-1px;top:9px;width:51px;height:1px;background:#3a3a3a"></div><div style="left:2px;top:2px;width:5px;height:5px;background:#e8902a;border-radius:3px;border:1px solid #6a3a08"></div></div>
<div style="left:670px;top:917px;width:51px;height:20px;border:1px solid #2e2e2e;border-radius:4px;background:linear-gradient(#9e9e9e,#8a8a8a);overflow:hidden"><div style="left:9px;top:-1px;width:1px;height:20px;background:#3a3a3a"></div><div style="left:19px;top:-1px;width:1px;height:20px;background:#3a3a3a"></div><div style="left:29px;top:-1px;width:1px;height:20px;background:#3a3a3a"></div><div style="left:39px;top:-1px;width:1px;height:20px;background:#3a3a3a"></div><div style="left:-1px;top:9px;width:51px;height:1px;background:#3a3a3a"></div></div>
<div style="left:725px;top:917px;width:20px;height:20px;border:1px solid #1e1e1e;border-radius:4px;background:linear-gradient(#3b3b3b,#575757);box-shadow:0 1px 0 rgba(255,255,255,.1);background:linear-gradient(#505050,#626262)"></div>
<svg style="left:727px;top:919px" width="16" height="16" viewBox="0 0 16 16"><rect x="2" y="3" width="9" height="10" fill="#ddd" stroke="#222" stroke-width=".9"/><path d="M10 9 a2.2 2.2 0 1 1 3 0 v3 h-3 z" fill="#eee" stroke="#222" stroke-width=".9"/></svg>
<div style="left:750px;top:917px;width:20px;height:20px;border:1px solid #2e2e2e;border-radius:4px;background:linear-gradient(#999,#8a8a8a);box-shadow:0 1px 0 rgba(255,255,255,.1);"></div>
<svg style="left:752px;top:919px" width="16" height="16" viewBox="0 0 16 16"><circle cx="8" cy="8" r="6" fill="none" stroke="#a8a8a8" stroke-width="1.4"/><circle cx="8" cy="8" r="2.8" fill="none" stroke="#a8a8a8" stroke-width="1.4"/></svg>
<div style="left:775px;top:917px;width:21px;height:20px;border:1px solid #2e2e2e;border-radius:4px 0 0 4px;background:linear-gradient(#999,#8a8a8a);box-shadow:0 1px 0 rgba(255,255,255,.1);"></div>
<svg style="left:777px;top:919px" width="16" height="16" viewBox="0 0 16 16"><path d="M3.5 11.5 L9 5.5 a3.2 3.2 0 0 1 4.6 4.4 L8 15.5" fill="none" stroke="#4a4a4a" stroke-width="3.4"/><path d="M3.5 11.5 L9 5.5 a3.2 3.2 0 0 1 4.6 4.4 L8 15.5" fill="none" stroke="#b4b4b4" stroke-width="1.8"/></svg>
<div style="left:795px;top:917px;width:35px;height:20px;border:1px solid #1e1e1e;border-radius:0 4px 4px 0;background:linear-gradient(#3b3b3b,#575757);box-shadow:0 1px 0 rgba(255,255,255,.1);"></div>
<svg style="left:799px;top:919px" width="16" height="16" viewBox="0 0 16 16"><path d="M5 3 V15 M11 3 V15 M1 7 H15 M1 12 H15" stroke="#e8e8e8" stroke-width="1.2"/><circle cx="5" cy="4.5" r="2.6" fill="#5a9ae8" stroke="#fff" stroke-width=".8"/></svg>
<svg style="left:820px;top:921px" width="7" height="13" viewBox="0 0 7 13"><path d="M3.5 0.5 L6.5 5 L0.5 5 Z M3.5 12.5 L6.5 8 L0.5 8 Z" fill="#a8a8a8"/></svg>
<div style="left:835px;top:917px;width:21px;height:20px;border:1px solid #2e2e2e;border-radius:4px 0 0 4px;background:linear-gradient(#aeaeae,#8c8c8c);box-shadow:0 1px 0 rgba(255,255,255,.1);"></div>
<svg style="left:837px;top:919px" width="16" height="16" viewBox="0 0 16 16"><rect x="1.5" y="4.5" width="13" height="9" rx="1" fill="#c8c8c8" stroke="#222" stroke-width=".9"/><circle cx="8" cy="9" r="3" fill="#555" stroke="#111" stroke-width=".8"/><rect x="3" y="2.5" width="4" height="2" fill="#444"/><circle cx="13" cy="3" r="1.8" fill="#f4e060"/></svg>
<div style="left:855px;top:917px;width:21px;height:20px;border:1px solid #2e2e2e;border-radius:0 4px 4px 0;background:linear-gradient(#aeaeae,#8c8c8c);box-shadow:0 1px 0 rgba(255,255,255,.1);"></div>
<svg style="left:857px;top:919px" width="16" height="16" viewBox="0 0 16 16"><rect x="1.5" y="6.5" width="13" height="8" fill="#444" stroke="#111" stroke-width=".9"/><path d="M1 6 L14 2 L14.5 4 L1.5 8Z" fill="#eee" stroke="#111" stroke-width=".8"/><path d="M3 9 H13 M3 11.5 H13" stroke="#ddd" stroke-width="1"/></svg>
<!-- timeline -->
<div style="left:8px;top:941px;width:1651px;height:47px;overflow:hidden"><div style="left:0px;top:0px;width:1651px;height:47px;background:#424242"></div><div style="left:285.23999999999995px;top:0px;width:1205.16px;height:47px;background:#727272"></div><div style="left:14px;top:0px;width:1px;height:47px;background:#3e3e3e"></div><div style="left:38px;top:0px;width:1px;height:47px;background:#363636"></div><div style="left:63px;top:0px;width:1px;height:47px;background:#3e3e3e"></div><div style="left:87px;top:0px;width:1px;height:47px;background:#363636"></div><div style="left:111px;top:0px;width:1px;height:47px;background:#3e3e3e"></div><div style="left:135px;top:0px;width:1px;height:47px;background:#363636"></div><div style="left:159px;top:0px;width:1px;height:47px;background:#3e3e3e"></div><div style="left:184px;top:0px;width:1px;height:47px;background:#363636"></div><div style="left:208px;top:0px;width:1px;height:47px;background:#3e3e3e"></div><div style="left:232px;top:0px;width:1px;height:47px;background:#363636"></div><div style="left:256px;top:0px;width:1px;height:47px;background:#3e3e3e"></div><div style="left:280px;top:0px;width:1px;height:47px;background:#363636"></div><div style="left:305px;top:0px;width:1px;height:47px;background:#696969"></div><div style="left:329px;top:0px;width:1px;height:47px;background:#5b5b5b"></div><div style="left:353px;top:0px;width:1px;height:47px;background:#696969"></div><div style="left:377px;top:0px;width:1px;height:47px;background:#5b5b5b"></div><div style="left:401px;top:0px;width:1px;height:47px;background:#696969"></div><div style="left:426px;top:0px;width:1px;height:47px;background:#5b5b5b"></div><div style="left:450px;top:0px;width:1px;height:47px;background:#696969"></div><div style="left:474px;top:0px;width:1px;height:47px;background:#5b5b5b"></div><div style="left:498px;top:0px;width:1px;height:47px;background:#696969"></div><div style="left:522px;top:0px;width:1px;height:47px;background:#5b5b5b"></div><div style="left:547px;top:0px;width:1px;height:47px;background:#696969"></div><div style="left:571px;top:0px;width:1px;height:47px;background:#5b5b5b"></div><div style="left:595px;top:0px;width:1px;height:47px;background:#696969"></div><div style="left:619px;top:0px;width:1px;height:47px;background:#5b5b5b"></div><div style="left:643px;top:0px;width:1px;height:47px;background:#696969"></div><div style="left:668px;top:0px;width:1px;height:47px;background:#5b5b5b"></div><div style="left:692px;top:0px;width:1px;height:47px;background:#696969"></div><div style="left:716px;top:0px;width:1px;height:47px;background:#5b5b5b"></div><div style="left:740px;top:0px;width:1px;height:47px;background:#696969"></div><div style="left:764px;top:0px;width:1px;height:47px;background:#5b5b5b"></div><div style="left:789px;top:0px;width:1px;height:47px;background:#696969"></div><div style="left:813px;top:0px;width:1px;height:47px;background:#5b5b5b"></div><div style="left:837px;top:0px;width:1px;height:47px;background:#696969"></div><div style="left:861px;top:0px;width:1px;height:47px;background:#5b5b5b"></div><div style="left:885px;top:0px;width:1px;height:47px;background:#696969"></div><div style="left:910px;top:0px;width:1px;height:47px;background:#5b5b5b"></div><div style="left:934px;top:0px;width:1px;height:47px;background:#696969"></div><div style="left:958px;top:0px;width:1px;height:47px;background:#5b5b5b"></div><div style="left:982px;top:0px;width:1px;height:47px;background:#696969"></div><div style="left:1006px;top:0px;width:1px;height:47px;background:#5b5b5b"></div><div style="left:1031px;top:0px;width:1px;height:47px;background:#696969"></div><div style="left:1055px;top:0px;width:1px;height:47px;background:#5b5b5b"></div><div style="left:1079px;top:0px;width:1px;height:47px;background:#696969"></div><div style="left:1103px;top:0px;width:1px;height:47px;background:#5b5b5b"></div><div style="left:1127px;top:0px;width:1px;height:47px;background:#696969"></div><div style="left:1152px;top:0px;width:1px;height:47px;background:#5b5b5b"></div><div style="left:1176px;top:0px;width:1px;height:47px;background:#696969"></div><div style="left:1200px;top:0px;width:1px;height:47px;background:#5b5b5b"></div><div style="left:1224px;top:0px;width:1px;height:47px;background:#696969"></div><div style="left:1248px;top:0px;width:1px;height:47px;background:#5b5b5b"></div><div style="left:1273px;top:0px;width:1px;height:47px;background:#696969"></div><div style="left:1297px;top:0px;width:1px;height:47px;background:#5b5b5b"></div><div style="left:1321px;top:0px;width:1px;height:47px;background:#696969"></div><div style="left:1345px;top:0px;width:1px;height:47px;background:#5b5b5b"></div><div style="left:1369px;top:0px;width:1px;height:47px;background:#696969"></div><div style="left:1394px;top:0px;width:1px;height:47px;background:#5b5b5b"></div><div style="left:1418px;top:0px;width:1px;height:47px;background:#696969"></div><div style="left:1442px;top:0px;width:1px;height:47px;background:#5b5b5b"></div><div style="left:1466px;top:0px;width:1px;height:47px;background:#696969"></div><div style="left:1490px;top:0px;width:1px;height:47px;background:#5b5b5b"></div><div style="left:1515px;top:0px;width:1px;height:47px;background:#3e3e3e"></div><div style="left:1539px;top:0px;width:1px;height:47px;background:#363636"></div><div style="left:1563px;top:0px;width:1px;height:47px;background:#3e3e3e"></div><div style="left:1587px;top:0px;width:1px;height:47px;background:#363636"></div><div style="left:1611px;top:0px;width:1px;height:47px;background:#3e3e3e"></div><div style="left:1636px;top:0px;width:1px;height:47px;background:#363636"></div><div style="left:284px;top:0px;width:3px;height:47px;background:#62cc3c"></div></div>
<svg style="left:1646px;top:941px" width="12" height="12" viewBox="0 0 12 12"><path d="M1 0 L12 11 M5 0 L12 7 M9 0 L12 3" stroke="rgba(255,255,255,.16)" stroke-width="1" fill="none"/><path d="M0 0 L12 12 M4 0 L12 8 M8 0 L12 4" stroke="rgba(0,0,0,.42)" stroke-width="1" fill="none"/></svg>
<div style="left:8px;top:988px;width:1651px;height:17px;background:#727272"></div>
<div style="left:12px;top:989px;width:1641px;height:14px;border:1px solid #4a4a4a;border-radius:7px;background:linear-gradient(#9a9a9a,#868686)"></div>
<div style="left:14px;top:991px;width:10px;height:10px;border-radius:5px;background:#5a5a5a;border:1px solid #444"></div>
<div style="left:1644px;top:991px;width:10px;height:10px;border-radius:5px;background:#5a5a5a;border:1px solid #444"></div>
<div class="t" style="left:25.9px;top:990px;width:40px;text-align:center;font-size:11px;letter-spacing:-0.2px">-50</div>
<div class="t" style="left:74.2px;top:990px;width:40px;text-align:center;font-size:11px;letter-spacing:-0.2px">-40</div>
<div class="t" style="left:122.5px;top:990px;width:40px;text-align:center;font-size:11px;letter-spacing:-0.2px">-30</div>
<div class="t" style="left:170.8px;top:990px;width:40px;text-align:center;font-size:11px;letter-spacing:-0.2px">-20</div>
<div class="t" style="left:219.1px;top:990px;width:40px;text-align:center;font-size:11px;letter-spacing:-0.2px">-10</div>
<div class="t" style="left:270.4px;top:990px;width:40px;text-align:center;font-size:11px;letter-spacing:-0.2px">0</div>
<div class="t" style="left:318.5px;top:990px;width:40px;text-align:center;font-size:11px;letter-spacing:-0.2px">10</div>
<div class="t" style="left:366.6px;top:990px;width:40px;text-align:center;font-size:11px;letter-spacing:-0.2px">20</div>
<div class="t" style="left:414.6px;top:990px;width:40px;text-align:center;font-size:11px;letter-spacing:-0.2px">30</div>
<div class="t" style="left:462.7px;top:990px;width:40px;text-align:center;font-size:11px;letter-spacing:-0.2px">40</div>
<div class="t" style="left:510.8px;top:990px;width:40px;text-align:center;font-size:11px;letter-spacing:-0.2px">50</div>
<div class="t" style="left:558.9px;top:990px;width:40px;text-align:center;font-size:11px;letter-spacing:-0.2px">60</div>
<div class="t" style="left:607.0px;top:990px;width:40px;text-align:center;font-size:11px;letter-spacing:-0.2px">70</div>
<div class="t" style="left:655.0px;top:990px;width:40px;text-align:center;font-size:11px;letter-spacing:-0.2px">80</div>
<div class="t" style="left:703.1px;top:990px;width:40px;text-align:center;font-size:11px;letter-spacing:-0.2px">90</div>
<div class="t" style="left:751.2px;top:990px;width:40px;text-align:center;font-size:11px;letter-spacing:-0.2px">100</div>
<div class="t" style="left:799.3px;top:990px;width:40px;text-align:center;font-size:11px;letter-spacing:-0.2px">110</div>
<div class="t" style="left:847.4px;top:990px;width:40px;text-align:center;font-size:11px;letter-spacing:-0.2px">120</div>
<div class="t" style="left:895.4px;top:990px;width:40px;text-align:center;font-size:11px;letter-spacing:-0.2px">130</div>
<div class="t" style="left:943.5px;top:990px;width:40px;text-align:center;font-size:11px;letter-spacing:-0.2px">140</div>
<div class="t" style="left:991.6px;top:990px;width:40px;text-align:center;font-size:11px;letter-spacing:-0.2px">150</div>
<div class="t" style="left:1039.7px;top:990px;width:40px;text-align:center;font-size:11px;letter-spacing:-0.2px">160</div>
<div class="t" style="left:1087.8px;top:990px;width:40px;text-align:center;font-size:11px;letter-spacing:-0.2px">170</div>
<div class="t" style="left:1135.8px;top:990px;width:40px;text-align:center;font-size:11px;letter-spacing:-0.2px">180</div>
<div class="t" style="left:1183.9px;top:990px;width:40px;text-align:center;font-size:11px;letter-spacing:-0.2px">190</div>
<div class="t" style="left:1232.0px;top:990px;width:40px;text-align:center;font-size:11px;letter-spacing:-0.2px">200</div>
<div class="t" style="left:1280.1px;top:990px;width:40px;text-align:center;font-size:11px;letter-spacing:-0.2px">210</div>
<div class="t" style="left:1328.2px;top:990px;width:40px;text-align:center;font-size:11px;letter-spacing:-0.2px">220</div>
<div class="t" style="left:1376.2px;top:990px;width:40px;text-align:center;font-size:11px;letter-spacing:-0.2px">230</div>
<div class="t" style="left:1424.3px;top:990px;width:40px;text-align:center;font-size:11px;letter-spacing:-0.2px">240</div>
<div class="t" style="left:1472.4px;top:990px;width:40px;text-align:center;font-size:11px;letter-spacing:-0.2px">250</div>
<div class="t" style="left:1520.5px;top:990px;width:40px;text-align:center;font-size:11px;letter-spacing:-0.2px">260</div>
<div class="t" style="left:1568.6px;top:990px;width:40px;text-align:center;font-size:11px;letter-spacing:-0.2px">270</div>
<div class="t" style="left:1616.6px;top:990px;width:40px;text-align:center;font-size:11px;letter-spacing:-0.2px">280</div>
<div style="left:8px;top:1005px;width:1651px;height:27px;background:#727272;border-top:1px solid #5e5e5e"></div>
<svg style="left:8px;top:1020px" width="12" height="12" viewBox="0 0 12 12"><path d="M0 1 L11 12 M0 5 L7 12 M0 9 L3 12" stroke="rgba(255,255,255,.16)" stroke-width="1" fill="none"/><path d="M0 0 L12 12 M0 4 L8 12 M0 8 L4 12" stroke="rgba(0,0,0,.42)" stroke-width="1" fill="none"/></svg>
<div class="dk" style="left:17px;top:1009px;width:30px;height:20px;"></div>
<svg style="left:21px;top:1011px" width="16" height="16" viewBox="0 0 16 16"><circle cx="8" cy="8" r="6.6" fill="#eee" stroke="#333" stroke-width="1"/><path d="M8 8 L8 3.5 M8 8 L11 10" stroke="#c03030" stroke-width="1.3"/></svg>
<svg style="left:38px;top:1013px" width="7" height="13" viewBox="0 0 7 13"><path d="M3.5 0.5 L6.5 5 L0.5 5 Z M3.5 12.5 L6.5 8 L0.5 8 Z" fill="#a8a8a8"/></svg>
<div class="t" style="left:60px;top:1014px;color:#000;font-size:11px;">View</div>
<div class="t" style="left:104px;top:1014px;color:#000;font-size:11px;">Marker</div>
<div class="t" style="left:159px;top:1014px;color:#000;font-size:11px;">Frame</div>
<div class="t" style="left:211px;top:1014px;color:#000;font-size:11px;">Playback</div>
<div style="left:269px;top:1009px;width:21px;height:20px;border:1px solid #2e2e2e;border-radius:4px 0 0 4px;background:linear-gradient(#aeaeae,#8c8c8c);box-shadow:0 1px 0 rgba(255,255,255,.1);"></div>
<svg style="left:271px;top:1011px" width="16" height="16" viewBox="0 0 16 16"><circle cx="8" cy="8" r="6.3" fill="#eee" stroke="#333" stroke-width="1"/><path d="M8 8 L8 1.7 A6.3 6.3 0 0 1 14.3 8 Z" fill="#f09030"/><path d="M8 8 V3 M8 8 H12" stroke="#333" stroke-width="1"/></svg>
<div style="left:289px;top:1009px;width:21px;height:20px;border:1px solid #2e2e2e;border-radius:0 4px 4px 0;background:linear-gradient(#aeaeae,#8c8c8c);box-shadow:0 1px 0 rgba(255,255,255,.1);"></div>
<svg style="left:291px;top:1011px" width="16" height="16" viewBox="0 0 16 16"><rect x="3" y="7" width="10" height="7.5" rx="1" fill="#e8e8e8" stroke="#222" stroke-width="1"/><path d="M5 7 V5 a3 3 0 0 1 6 0 V7" fill="none" stroke="#222" stroke-width="1.6"/><rect x="7.3" y="9" width="1.4" height="3" fill="#222"/></svg>
<div class="num" style="left:314px;top:1009px;width:117px;height:20px;border-radius:10px 0 0 10px"></div>
<div class="num" style="left:430px;top:1009px;width:112px;height:20px;border-radius:0 10px 10px 0"></div>
<div class="t" style="left:330px;top:1014px;color:#000;font-size:11px;">Start:</div>
<div class="t" style="left:380px;top:1014px;width:36px;text-align:right">1</div>
<div class="t" style="left:446px;top:1014px;color:#000;font-size:11px;">End:</div>
<div class="t" style="left:490px;top:1014px;width:36px;text-align:right">250</div>
<div class="num" style="left:548px;top:1009px;width:89px;height:20px;border-radius:10px"></div>
<div class="t" style="left:586px;top:1014px;width:36px;text-align:right">1</div>
<svg style="left:321px;top:1014px" width="6" height="9" viewBox="0 0 6 9"><path d="M5 1 L1 4.5 L5 8Z" fill="#555"/></svg>
<svg style="left:419px;top:1014px" width="6" height="9" viewBox="0 0 6 9"><path d="M1 1 L5 4.5 L1 8Z" fill="#555"/></svg>
<svg style="left:437px;top:1014px" width="6" height="9" viewBox="0 0 6 9"><path d="M5 1 L1 4.5 L5 8Z" fill="#555"/></svg>
<svg style="left:530px;top:1014px" width="6" height="9" viewBox="0 0 6 9"><path d="M1 1 L5 4.5 L1 8Z" fill="#555"/></svg>
<svg style="left:555px;top:1014px" width="6" height="9" viewBox="0 0 6 9"><path d="M5 1 L1 4.5 L5 8Z" fill="#555"/></svg>
<svg style="left:626px;top:1014px" width="6" height="9" viewBox="0 0 6 9"><path d="M1 1 L5 4.5 L1 8Z" fill="#555"/></svg>
<div style="left:653px;top:1009px;width:21px;height:20px;border:1px solid #2e2e2e;border-radius:4px 0 0 4px;background:linear-gradient(#aeaeae,#8c8c8c);box-shadow:0 1px 0 rgba(255,255,255,.1);"></div>
<svg style="left:655px;top:1011px" width="16" height="16" viewBox="0 0 16 16"><path d="M3 3 V13 M13 3 L8 8 L13 13Z M8 3 L3.5 8 L8 13Z" fill="#f2f2f2" stroke="#222" stroke-width="1"/></svg>
<div style="left:673px;top:1009px;width:21px;height:20px;border:1px solid #2e2e2e;border-radius:0;background:linear-gradient(#aeaeae,#8c8c8c);box-shadow:0 1px 0 rgba(255,255,255,.1);"></div>
<svg style="left:675px;top:1011px" width="16" height="16" viewBox="0 0 16 16"><path d="M8 3 L3 8 L8 13Z M13 3 L8 8 L13 13Z" fill="#f2f2f2" stroke="#222" stroke-width="1"/></svg>
<div style="left:693px;top:1009px;width:21px;height:20px;border:1px solid #2e2e2e;border-radius:0;background:linear-gradient(#aeaeae,#8c8c8c);box-shadow:0 1px 0 rgba(255,255,255,.1);"></div>
<svg style="left:695px;top:1011px" width="16" height="16" viewBox="0 0 16 16"><path d="M12.5 1.5 L2.5 8 L12.5 14.5Z" fill="#f2f2f2" stroke="#222" stroke-width="1"/></svg>
<div style="left:713px;top:1009px;width:21px;height:20px;border:1px solid #2e2e2e;border-radius:0;background:linear-gradient(#aeaeae,#8c8c8c);box-shadow:0 1px 0 rgba(255,255,255,.1);"></div>
<svg style="left:715px;top:1011px" width="16" height="16" viewBox="0 0 16 16"><path d="M3.5 1.5 L13.5 8 L3.5 14.5Z" fill="#f2f2f2" stroke="#222" stroke-width="1"/></svg>
<div style="left:733px;top:1009px;width:21px;height:20px;border:1px solid #2e2e2e;border-radius:0;background:linear-gradient(#aeaeae,#8c8c8c);box-shadow:0 1px 0 rgba(255,255,255,.1);"></div>
<svg style="left:735px;top:1011px" width="16" height="16" viewBox="0 0 16 16"><path d="M3 3 L8 8 L3 13Z M8 3 L13 8 L8 13Z" fill="#f2f2f2" stroke="#222" stroke-width="1"/></svg>
<div style="left:753px;top:1009px;width:21px;height:20px;border:1px solid #2e2e2e;border-radius:0 4px 4px 0;background:linear-gradient(#aeaeae,#8c8c8c);box-shadow:0 1px 0 rgba(255,255,255,.1);"></div>
<svg style="left:755px;top:1011px" width="16" height="16" viewBox="0 0 16 16"><path d="M13 3 V13 M3 3 L8 8 L3 13Z M8 3 L12.5 8 L8 13Z" fill="#f2f2f2" stroke="#222" stroke-width="1"/></svg>
<div class="dk" style="left:778px;top:1009px;width:115px;height:20px;"><span style="">No Sync</span></div>
<svg style="left:883px;top:1013px" width="7" height="13" viewBox="0 0 7 13"><path d="M3.5 0.5 L6.5 5 L0.5 5 Z M3.5 12.5 L6.5 8 L0.5 8 Z" fill="#a8a8a8"/></svg>
<div style="left:909px;top:1009px;width:20px;height:20px;border:1px solid #2e2e2e;border-radius:4px;background:linear-gradient(#aeaeae,#8c8c8c);box-shadow:0 1px 0 rgba(255,255,255,.1);"></div>
<svg style="left:911px;top:1011px" width="16" height="16" viewBox="0 0 16 16"><circle cx="8" cy="8" r="5" fill="#e8401a" stroke="#7a1a08" stroke-width="1"/></svg>
<div class="fld" style="left:934px;top:1009px;width:131px;height:20px;border-radius:4px 0 0 4px"></div>
<svg style="left:937px;top:1011px" width="18" height="16" viewBox="0 0 18 16"><path d="M4 1.5 H7 V8 a3.2 3.2 0 1 1 -3 0Z" fill="#f0f0e0" stroke="#3a3a20" stroke-width="1"/><path d="M9 12 L15 7" stroke="#3a3a20" stroke-width="2.6"/><path d="M9 12 L15 7" stroke="#f0f0e0" stroke-width="1.2"/><circle cx="8.5" cy="12.5" r="2" fill="#f0f0e0" stroke="#3a3a20" stroke-width=".8"/></svg>
<div style="left:1064px;top:1009px;width:21px;height:20px;border:1px solid #2e2e2e;border-radius:0;background:linear-gradient(#aeaeae,#8c8c8c);box-shadow:0 1px 0 rgba(255,255,255,.1);"></div>
<svg style="left:1066px;top:1011px" width="16" height="16" viewBox="0 0 16 16"><path d="M5 11 L13 4" stroke="#222" stroke-width="3"/><path d="M5 11 L13 4" stroke="#eee" stroke-width="1.4"/><circle cx="4.5" cy="11.5" r="2.6" fill="#eee" stroke="#222" stroke-width="1"/></svg>
<div style="left:1084px;top:1009px;width:21px;height:20px;border:1px solid #2e2e2e;border-radius:0 4px 4px 0;background:linear-gradient(#aeaeae,#8c8c8c);box-shadow:0 1px 0 rgba(255,255,255,.1);"></div>
<svg style="left:1086px;top:1011px" width="16" height="16" viewBox="0 0 16 16"><path d="M5 11 L13 4" stroke="#222" stroke-width="3"/><path d="M5 11 L13 4" stroke="#eee" stroke-width="1.4"/><circle cx="4.5" cy="11.5" r="2.6" fill="#eee" stroke="#222" stroke-width="1"/><path d="M3 3 L13 13 M13 3 L3 13" stroke="#d83030" stroke-width="1.6"/></svg>
<!-- outliner -->
<div style="left:1660px;top:57px;width:252px;height:169px;background:#727272"></div>
<div style="left:1660px;top:105px;width:252px;height:20px;background:rgba(255,255,255,.03)"></div>
<div style="left:1660px;top:145px;width:252px;height:20px;background:rgba(255,255,255,.03)"></div>
<div style="left:1660px;top:185px;width:252px;height:20px;background:rgba(255,255,255,.03)"></div>
<div style="left:1660px;top:57px;width:252px;height:27px;background:#727272"></div>
<svg style="left:1900px;top:57px" width="12" height="12" viewBox="0 0 12 12"><path d="M1 0 L12 11 M5 0 L12 7 M9 0 L12 3" stroke="rgba(255,255,255,.16)" stroke-width="1" fill="none"/><path d="M0 0 L12 12 M4 0 L12 8 M8 0 L12 4" stroke="rgba(0,0,0,.42)" stroke-width="1" fill="none"/></svg>
<div class="dk" style="left:1669px;top:61px;width:30px;height:19px;"></div>
<svg style="left:1673px;top:62px" width="16" height="16" viewBox="0 0 16 16"><path d="M3.5 3 V13.5 H8 M3.5 8.5 H8" fill="none" stroke="#e0e0e0" stroke-width="1"/><rect x="1" y="1" width="6" height="2.6" fill="#f0a050"/><rect x="8" y="7" width="6" height="2.6" fill="#e8e8e8"/><rect x="8" y="12" width="6" height="2.6" fill="#e8e8e8"/></svg>
<svg style="left:1690px;top:64px" width="7" height="13" viewBox="0 0 7 13"><path d="M3.5 0.5 L6.5 5 L0.5 5 Z M3.5 12.5 L6.5 8 L0.5 8 Z" fill="#a8a8a8"/></svg>
<div class="t" style="left:1712px;top:65px;color:#000;font-size:11px;">View</div>
<div class="t" style="left:1756px;top:65px;color:#000;font-size:11px;">Search</div>
<div class="dk" style="left:1803px;top:61px;width:120px;height:19px;border-radius:4px 0 0 4px"><span style="margin-top:-6px">All Scenes</span></div>
<div style="left:1660px;top:85px;width:193px;height:19px;background:#808891;opacity:.55"></div>
<div style="left:1660px;top:85px;width:193px;height:19px;background:linear-gradient(#8a9098,#7d848c);opacity:.5"></div>
<div style="left:1853px;top:85px;width:1px;height:124px;background:#666"></div>
<div style="left:1873px;top:85px;width:1px;height:124px;background:#666"></div>
<div style="left:1893px;top:85px;width:1px;height:124px;background:#666"></div>
<div style="left:1687px;top:100px;width:1px;height:75px;background:#555"></div>
<div style="left:1673px;top:94px;width:14px;height:1px;background:#555"></div>
<div style="left:1693px;top:154px;width:14px;height:1px;background:#555"></div>
<div style="left:1693px;top:174px;width:14px;height:1px;background:#555"></div>
<svg style="left:1663px;top:89px" width="10" height="10" viewBox="0 0 10 10"><circle cx="5" cy="5" r="4.2" fill="#e6e6e6" stroke="#222" stroke-width="1"/><path d="M2.5 5 H7.5" stroke="#111" stroke-width="1.3"/></svg>
<svg style="left:1681px;top:85px" width="18" height="18" viewBox="0 0 18 18"><circle cx="9" cy="9" r="8.5" fill="#d8e0f0" opacity=".35"/><rect x="9" y="2.5" width="5.5" height="9.5" rx="2.2" fill="#4b7fc2" stroke="#1d3a6a" stroke-width=".8"/><circle cx="7" cy="12" r="3.6" fill="#ececec" stroke="#333" stroke-width=".8"/><circle cx="4" cy="4" r="1.8" fill="#e9e27a"/></svg>
<div class="t" style="left:1701px;top:89px;color:#000;font-size:11px;">Scene</div>
<svg style="left:1688px;top:109px" width="10" height="10" viewBox="0 0 10 10"><circle cx="5" cy="5" r="4.2" fill="#e6e6e6" stroke="#222" stroke-width="1"/><path d="M2.5 5 H7.5 M5 2.5 V7.5" stroke="#111" stroke-width="1.3"/></svg>
<svg style="left:1701px;top:105px" width="18" height="18" viewBox="0 0 18 18"><rect x="5" y="5" width="11" height="11" fill="#e8e4d0" stroke="#333" stroke-width=".9" transform="rotate(12 10 10)"/><rect x="1.5" y="1.5" width="11" height="11" fill="#f2f2f2" stroke="#222" stroke-width=".9"/><rect x="3" y="3" width="8" height="8" fill="#c8d8f0"/><path d="M8 3.5 V8 a1.7 1.7 0 1 1 -1.2 -1.6 V3.5Z" fill="#2a4a9a"/></svg>
<div class="t" style="left:1721px;top:109px;color:#000;font-size:11px;">RenderLayers</div>
<div style="left:1799px;top:107px;width:2px;height:14px;background:#3a3a3a"></div>
<div style="left:1808px;top:104px;width:20px;height:20px;border-radius:10px;background:rgba(240,240,220,.25)"></div>
<svg style="left:1809px;top:105px" width="18" height="18" viewBox="0 0 18 18"><rect x="5" y="5" width="11" height="11" fill="#e8e4d0" stroke="#333" stroke-width=".9" transform="rotate(12 10 10)"/><rect x="1.5" y="1.5" width="11" height="11" fill="#f2f2f2" stroke="#222" stroke-width=".9"/><rect x="3" y="3" width="8" height="8" fill="#c8d8f0"/><path d="M8 3.5 V8 a1.7 1.7 0 1 1 -1.2 -1.6 V3.5Z" fill="#2a4a9a"/></svg>
<svg style="left:1701px;top:125px" width="18" height="18" viewBox="0 0 18 18"><circle cx="9" cy="9" r="8" fill="#d0d8e8" stroke="#55607a" stroke-width="1"/><circle cx="9" cy="9" r="6.3" fill="#4a80b8"/><path d="M5 6 Q8 3.5 10 5.5 Q9 8 7 8.5 Q6 11 4.5 10 Q3.5 8 5 6Z M10.5 8.5 Q13 8 14 10 Q13 13 11 13.5 Q10 11 10.5 8.5Z" fill="#4f9a50"/></svg>
<div class="t" style="left:1721px;top:129px;color:#000;font-size:11px;">World</div>
<svg style="left:1683px;top:149px" width="10" height="10" viewBox="0 0 10 10"><circle cx="5" cy="5" r="4.2" fill="#e6e6e6" stroke="#222" stroke-width="1"/><path d="M2.5 5 H7.5 M5 2.5 V7.5" stroke="#111" stroke-width="1.3"/></svg>
<svg style="left:1701px;top:146px" width="18" height="18" viewBox="-2.5 -2 22 22"><path d="M2.5 3.5 L15.5 3.5 L9 15 Z" fill="none" stroke="#e88a2a" stroke-width="1.9" stroke-linejoin="round"/><circle cx="2.5" cy="3.5" r="1.5" fill="#fff" stroke="#e88a2a" stroke-width=".7"/><circle cx="15.5" cy="3.5" r="1.5" fill="#fff" stroke="#e88a2a" stroke-width=".7"/><circle cx="9" cy="15" r="1.5" fill="#fff" stroke="#e88a2a" stroke-width=".7"/></svg>
<div class="t" style="left:1721px;top:149px;color:#fff;font-size:11px;">head_190483_0_head</div>
<svg style="left:1683px;top:169px" width="10" height="10" viewBox="0 0 10 10"><circle cx="5" cy="5" r="4.2" fill="#e6e6e6" stroke="#222" stroke-width="1"/><path d="M2.5 5 H7.5 M5 2.5 V7.5" stroke="#111" stroke-width="1.3"/></svg>
<svg style="left:1701px;top:166px" width="18" height="18" viewBox="-2.5 -2 22 22"><path d="M2.5 3.5 L15.5 3.5 L9 15 Z" fill="none" stroke="#e88a2a" stroke-width="1.9" stroke-linejoin="round"/><circle cx="2.5" cy="3.5" r="1.5" fill="#fff" stroke="#e88a2a" stroke-width=".7"/><circle cx="15.5" cy="3.5" r="1.5" fill="#fff" stroke="#e88a2a" stroke-width=".7"/><circle cx="9" cy="15" r="1.5" fill="#fff" stroke="#e88a2a" stroke-width=".7"/></svg>
<div class="t" style="left:1721px;top:169px;color:#000;font-size:11px;">head_190483_1_eyes</div>
<div style="left:1843px;top:147px;width:2px;height:14px;background:#3a3a3a"></div>
<svg style="left:1855px;top:148px" width="16" height="12" viewBox="0 0 16 12"><path d="M.8 6 Q8 -1 15.2 6 Q8 12.5 .8 6Z" fill="#f4f4f4" stroke="#222" stroke-width="1"/><circle cx="8" cy="5.6" r="2.6" fill="#333"/></svg>
<svg style="left:1878px;top:146px" width="12" height="16" viewBox="0 0 12 16"><path d="M1.5 1 L1.5 12.5 L4.5 9.8 L6.8 15 L9 14 L6.8 9 L10.5 9 Z" fill="#f4f4f4" stroke="#111" stroke-width="1"/></svg>
<svg style="left:1894px;top:147px" width="16" height="14" viewBox="0 0 16 14"><rect x="1" y="3" width="14" height="10" rx="1" fill="#d8d8d8" stroke="#222" stroke-width="1"/><rect x="3" y="1" width="5" height="2.5" fill="#333"/><circle cx="8.5" cy="8" r="3.4" fill="#555" stroke="#111" stroke-width=".9"/><circle cx="8.5" cy="8" r="1.4" fill="#ddd"/></svg>
<div style="left:1843px;top:167px;width:2px;height:14px;background:#3a3a3a"></div>
<svg style="left:1855px;top:168px" width="16" height="12" viewBox="0 0 16 12"><path d="M.8 6 Q8 -1 15.2 6 Q8 12.5 .8 6Z" fill="#f4f4f4" stroke="#222" stroke-width="1"/><circle cx="8" cy="5.6" r="2.6" fill="#333"/></svg>
<svg style="left:1878px;top:166px" width="12" height="16" viewBox="0 0 12 16"><path d="M1.5 1 L1.5 12.5 L4.5 9.8 L6.8 15 L9 14 L6.8 9 L10.5 9 Z" fill="#f4f4f4" stroke="#111" stroke-width="1"/></svg>
<svg style="left:1894px;top:167px" width="16" height="14" viewBox="0 0 16 14"><rect x="1" y="3" width="14" height="10" rx="1" fill="#d8d8d8" stroke="#222" stroke-width="1"/><rect x="3" y="1" width="5" height="2.5" fill="#333"/><circle cx="8.5" cy="8" r="3.4" fill="#555" stroke="#111" stroke-width=".9"/><circle cx="8.5" cy="8" r="1.4" fill="#ddd"/></svg>
<div style="left:1664px;top:209px;width:243px;height:13px;border-radius:7px;background:#5e5e5e;border:1px solid #4c4c4c"></div>
<div style="left:1664px;top:209px;width:204px;height:13px;border-radius:7px;background:linear-gradient(#9a9a9a,#858585);border:1px solid #444"></div>
<svg style="left:1660px;top:213px" width="12" height="12" viewBox="0 0 12 12"><path d="M0 1 L11 12 M0 5 L7 12 M0 9 L3 12" stroke="rgba(255,255,255,.16)" stroke-width="1" fill="none"/><path d="M0 0 L12 12 M0 4 L8 12 M0 8 L4 12" stroke="rgba(0,0,0,.42)" stroke-width="1" fill="none"/></svg>
<!-- props -->
<div style="left:1660px;top:227px;width:252px;height:805px;background:#727272"></div>
<div style="left:1660px;top:227px;width:252px;height:27px;background:#727272;border-bottom:1px solid #646464"></div>
<svg style="left:1900px;top:227px" width="12" height="12" viewBox="0 0 12 12"><path d="M1 0 L12 11 M5 0 L12 7 M9 0 L12 3" stroke="rgba(255,255,255,.16)" stroke-width="1" fill="none"/><path d="M0 0 L12 12 M4 0 L12 8 M8 0 L12 4" stroke="rgba(0,0,0,.42)" stroke-width="1" fill="none"/></svg>
<svg style="left:1660px;top:1020px" width="12" height="12" viewBox="0 0 12 12"><path d="M0 1 L11 12 M0 5 L7 12 M0 9 L3 12" stroke="rgba(255,255,255,.16)" stroke-width="1" fill="none"/><path d="M0 0 L12 12 M0 4 L8 12 M0 8 L4 12" stroke="rgba(0,0,0,.42)" stroke-width="1" fill="none"/></svg>
<div class="dk" style="left:1669px;top:230px;width:30px;height:20px;"></div>
<svg style="left:1673px;top:233px" width="16" height="15" viewBox="0 0 16 15"><rect x="1" y="2" width="13" height="4.4" rx="2" fill="#e8e8e8" stroke="#222" stroke-width=".8"/><rect x="1" y="8.6" width="13" height="4.4" rx="2" fill="#e8e8e8" stroke="#222" stroke-width=".8"/><rect x="8" y="3" width="5" height="2.4" rx="1" fill="#333"/><rect x="2" y="9.6" width="5" height="2.4" rx="1" fill="#333"/></svg>
<svg style="left:1690px;top:234px" width="7" height="13" viewBox="0 0 7 13"><path d="M3.5 0.5 L6.5 5 L0.5 5 Z M3.5 12.5 L6.5 8 L0.5 8 Z" fill="#a8a8a8"/></svg>
<div style="left:1706px;top:230px;width:21px;height:20px;border:1px solid #1e1e1e;border-radius:4px 0 0 4px;background:linear-gradient(#3b3b3b,#575757);box-shadow:0 1px 0 rgba(255,255,255,.1);box-shadow:none"></div>
<div style="left:1726px;top:230px;width:21px;height:20px;border:1px solid #1e1e1e;border-radius:0;background:linear-gradient(#3b3b3b,#575757);box-shadow:0 1px 0 rgba(255,255,255,.1);box-shadow:none"></div>
<div style="left:1746px;top:230px;width:21px;height:20px;border:1px solid #2e2e2e;border-radius:0;background:linear-gradient(#4a6fb0,#6b90d2);box-shadow:0 1px 0 rgba(255,255,255,.1);box-shadow:none"></div>
<div style="left:1766px;top:230px;width:21px;height:20px;border:1px solid #1e1e1e;border-radius:0;background:linear-gradient(#3b3b3b,#575757);box-shadow:0 1px 0 rgba(255,255,255,.1);box-shadow:none"></div>
<div style="left:1786px;top:230px;width:21px;height:20px;border:1px solid #1e1e1e;border-radius:0;background:linear-gradient(#3b3b3b,#575757);box-shadow:0 1px 0 rgba(255,255,255,.1);box-shadow:none"></div>
<div style="left:1806px;top:230px;width:21px;height:20px;border:1px solid #1e1e1e;border-radius:0;background:linear-gradient(#3b3b3b,#575757);box-shadow:0 1px 0 rgba(255,255,255,.1);box-shadow:none"></div>
<div style="left:1826px;top:230px;width:21px;height:20px;border:1px solid #1e1e1e;border-radius:0;background:linear-gradient(#3b3b3b,#575757);box-shadow:0 1px 0 rgba(255,255,255,.1);box-shadow:none"></div>
<div style="left:1846px;top:230px;width:21px;height:20px;border:1px solid #1e1e1e;border-radius:0;background:linear-gradient(#3b3b3b,#575757);box-shadow:0 1px 0 rgba(255,255,255,.1);box-shadow:none"></div>
<div style="left:1866px;top:230px;width:21px;height:20px;border:1px solid #1e1e1e;border-radius:0;background:linear-gradient(#3b3b3b,#575757);box-shadow:0 1px 0 rgba(255,255,255,.1);box-shadow:none"></div>
<div style="left:1886px;top:230px;width:21px;height:20px;border:1px solid #1e1e1e;border-radius:0;background:linear-gradient(#3b3b3b,#575757);box-shadow:0 1px 0 rgba(255,255,255,.1);box-shadow:none"></div>
<div style="left:1906px;top:230px;width:21px;height:20px;border:1px solid #1e1e1e;border-radius:0;background:linear-gradient(#3b3b3b,#575757);box-shadow:0 1px 0 rgba(255,255,255,.1);box-shadow:none"></div>
<svg style="left:1708px;top:232px;opacity:.82" width="16" height="16" viewBox="0 0 16 16"><rect x="1.5" y="4.5" width="13" height="9" rx="1" fill="#c8c8c8" stroke="#222" stroke-width=".9"/><circle cx="9" cy="9" r="3" fill="#555" stroke="#111" stroke-width=".8"/><rect x="3" y="2.5" width="5" height="2" fill="#333"/></svg>
<svg style="left:1728px;top:232px;opacity:.82" width="16" height="16" viewBox="0 0 16 16"><rect x="5" y="5" width="10" height="10" fill="#e8e4d0" stroke="#333" stroke-width=".9" transform="rotate(12 10 10)"/><rect x="1.5" y="1.5" width="10" height="10" fill="#f2f2f2" stroke="#222" stroke-width=".9"/><rect x="3" y="3" width="7" height="7" fill="#c8d8f0"/><path d="M7.5 3.5 V7.5 a1.5 1.5 0 1 1 -1.1 -1.5 V3.5Z" fill="#2a4a9a"/></svg>
<svg style="left:1748px;top:232px;opacity:.82" width="16" height="16" viewBox="0 0 16 16"><rect x="8.5" y="2" width="5.5" height="9" rx="2.2" fill="#4b7fc2" stroke="#1d3a6a" stroke-width=".8"/><circle cx="6.5" cy="11" r="3.6" fill="#ececec" stroke="#333" stroke-width=".8"/><circle cx="3.5" cy="3.5" r="1.8" fill="#e9e27a"/></svg>
<svg style="left:1768px;top:232px;opacity:.82" width="16" height="16" viewBox="0 0 16 16"><circle cx="8" cy="8" r="6.3" fill="#5a7ea6" stroke="#334" stroke-width=".8"/><path d="M4 5 Q7 2.5 9 4.5 Q8 7 6 7.5 Q5 10 3.5 9 Q2.5 7 4 5Z M9.5 7.5 Q12 7 13 9 Q12 12 10 12.5 Q9 10 9.5 7.5Z" fill="#4f9a50"/></svg>
<svg style="left:1788px;top:232px;opacity:.82" width="16" height="16" viewBox="0 0 16 16"><path d="M2 4.5 L8 2 L14 4.5 L14 11.5 L8 14.5 L2 11.5 Z" fill="#e09a40" stroke="#7a4a10" stroke-width=".8"/><path d="M8 7 L14 4.5 L14 11.5 L8 14.5 Z" fill="#b87018"/><path d="M2 4.5 L8 7 L14 4.5 L8 2Z" fill="#f0c080"/></svg>
<svg style="left:1808px;top:232px;opacity:.82" width="16" height="16" viewBox="0 0 16 16"><ellipse cx="5.5" cy="10" rx="4" ry="2.6" transform="rotate(-35 5.5 10)" fill="none" stroke="#ddd" stroke-width="1.8"/><ellipse cx="10.5" cy="6" rx="4" ry="2.6" transform="rotate(-35 10.5 6)" fill="none" stroke="#ddd" stroke-width="1.8"/></svg>
<svg style="left:1828px;top:232px;opacity:.82" width="16" height="16" viewBox="0 0 16 16"><path d="M2.5 13 L8.5 7 Q7.5 3.5 11 2 L12.5 2 L10.5 4.2 L11.8 5.6 L14 3.6 L14 5 Q12.8 8.6 9.6 8 L3.8 14.2 Q2.2 14.6 2.5 13Z" fill="#6a94d4" stroke="#1a2a50" stroke-width=".8"/></svg>
<svg style="left:1848px;top:232px;opacity:.82" width="16" height="16" viewBox="0 0 16 16"><path d="M2.5 3 L13.5 3 L8 13.5 Z" fill="none" stroke="#ddd" stroke-width="1.3"/><circle cx="2.5" cy="3" r="1.4" fill="#fff"/><circle cx="13.5" cy="3" r="1.4" fill="#fff"/><circle cx="8" cy="13.5" r="1.4" fill="#fff"/></svg>
<svg style="left:1868px;top:232px;opacity:.82" width="16" height="16" viewBox="0 0 16 16"><circle cx="8" cy="8" r="6" fill="#888" stroke="#222" stroke-width=".8"/><path d="M8 2 A6 6 0 0 1 14 8 L8 8Z" fill="#e8e8e8"/><path d="M8 14 A6 6 0 0 1 2 8 L8 8Z" fill="#d09060"/></svg>
<svg style="left:1888px;top:232px;opacity:.82" width="16" height="16" viewBox="0 0 16 16"><rect x="2" y="2" width="12" height="12" fill="#e8dcd0" stroke="#222" stroke-width=".8"/><path d="M2 2h4v4h-4z M10 2h4v4h-4z M6 6h4v4h-4z M2 10h4v4h-4z M10 10h4v4h-4z" fill="#a85a4a"/></svg>
<svg style="left:1908px;top:232px;opacity:.82" width="16" height="16" viewBox="0 0 16 16"></svg>
<div style="left:1895px;top:258px;width:12px;height:770px;border-radius:6px;background:#5f5f5f;border:1px solid #565656"></div>
<div style="left:1895px;top:730px;width:12px;height:298px;border-radius:6px;background:linear-gradient(90deg,#8e8e8e,#7c7c7c);border:1px solid #4a4a4a"></div>
<div class="t" style="left:1676px;top:255px;color:#000;font-size:11px;">v0.66, m...</div><div class="t" style="left:1746px;top:255px;color:#000;font-size:11px;">Visit Offici...</div><div class="t" style="left:1822px;top:255px;color:#000;font-size:11px;">Visit Offici...</div>
<div style="left:1665px;top:278px;width:225px;height:1px;background:#5a5a5a"></div><div style="left:1665px;top:279px;width:225px;height:1px;background:#7e7e7e"></div>
<svg style="left:1674px;top:286px" width="8" height="8" viewBox="0 0 8 8"><path d="M0 0 L8 0 L4 8 Z" fill="#1a1a1a"/></svg>
<div class="t ph" style="left:1685px;top:283px;color:#000;font-size:12px;">FIFA 15 Helping Tools</div>
<svg style="left:1873px;top:282px" width="14" height="14" viewBox="0 0 14 14"><path d="M1 0 L14 13 M5 0 L14 9 M9 0 L14 5" stroke="#8a8a8a" stroke-width="1" fill="none"/><path d="M0 0 L13 13 M4 0 L13 9 M8 0 L13 5" stroke="#5c5c5c" stroke-width="1" fill="none"/></svg>
<div class="btn c" style="left:1668px;top:311px;width:105px;height:27px;"><span style="margin-top:-7px">Fix Settings</span></div>
<div class="btn c" style="left:1781px;top:311px;width:106px;height:27px;"><span style="margin-top:-7px">Clean Up</span></div>
<div class="btn c" style="left:1668px;top:341px;width:219px;height:27px;"><span style="margin-top:-7px">Remove Unused Meshes</span></div>
<div class="btn c" style="left:1668px;top:371px;width:105px;height:27px;"><span style="margin-top:-7px">Clean Paths</span></div>
<div class="btn c" style="left:1781px;top:371px;width:106px;height:27px;"><span style="margin-top:-7px">Hide/Show Props</span></div>
<div class="t" style="left:1676px;top:408px;color:#000;font-size:11px;">v0.66, m...</div><div class="t" style="left:1746px;top:408px;color:#000;font-size:11px;">Visit Offici...</div><div class="t" style="left:1822px;top:408px;color:#000;font-size:11px;">Visit Offici...</div>
<div style="left:1665px;top:431px;width:225px;height:1px;background:#5a5a5a"></div><div style="left:1665px;top:432px;width:225px;height:1px;background:#7e7e7e"></div>
<svg style="left:1674px;top:439px" width="8" height="8" viewBox="0 0 8 8"><path d="M0 0 L8 0 L4 8 Z" fill="#1a1a1a"/></svg>
<div class="t ph" style="left:1685px;top:436px;color:#000;font-size:12px;">FIFA 15 3D Importer</div>
<svg style="left:1873px;top:435px" width="14" height="14" viewBox="0 0 14 14"><path d="M1 0 L14 13 M5 0 L14 9 M9 0 L14 5" stroke="#8a8a8a" stroke-width="1" fill="none"/><path d="M0 0 L13 13 M4 0 L13 9 M8 0 L13 5" stroke="#5c5c5c" stroke-width="1" fill="none"/></svg>
<svg style="left:1672px;top:465px" width="16" height="16" viewBox="0 0 16 16"><circle cx="8" cy="8" r="6.8" fill="#e9eef7" stroke="#27365a" stroke-width="1.4"/><circle cx="8" cy="8" r="5.3" fill="#3e5a9a"/><rect x="7" y="6.8" width="2.2" height="5" fill="#fff"/><rect x="6" y="6.8" width="2" height="1.2" fill="#fff"/><rect x="5.8" y="10.8" width="4.6" height="1.2" fill="#fff"/><circle cx="8" cy="4.6" r="1.3" fill="#fff"/></svg>
<div class="t" style="left:1692px;top:468px;color:#000;font-size:11px;">Main File</div>
<div style="left:1668px;top:488px;width:219px;height:182px;border:1px solid #565656;border-radius:5px;background:rgba(255,255,255,.035)"></div>
<svg style="left:1693px;top:498px" width="17" height="17" viewBox="0 0 17 17"><path d="M2 11 L9 8 L15 11 L15 13 L8 16 L2 13Z" fill="#888" stroke="#222" stroke-width=".8"/><path d="M2 11 L9 8 L15 11 L8 14Z" fill="#c8c8c8" stroke="#222" stroke-width=".6"/><path d="M9 11 L8 4" stroke="#222" stroke-width="2"/><circle cx="8" cy="3.5" r="2.6" fill="#e03030" stroke="#600" stroke-width=".7"/><circle cx="5" cy="11.5" r="1" fill="#d04040"/></svg>
<div class="t" style="left:1720px;top:501px;color:#000;font-size:11px;">Game Version</div>
<div class="dk" style="left:1808px;top:496px;width:75px;height:20px;"><span style="">FIFA 14</span></div>
<svg style="left:1873px;top:500px" width="7" height="13" viewBox="0 0 7 13"><path d="M3.5 0.5 L6.5 5 L0.5 5 Z M3.5 12.5 L6.5 8 L0.5 8 Z" fill="#a8a8a8"/></svg>
<div class="t" style="left:1681px;top:523px;color:#000;font-size:11px;">3D Model...</div><div class="fld" style="left:1747px;top:518px;width:115px;height:20px;border-radius:4px 0 0 4px"><span>C:\Users\...83_0.rx3</span></div><div style="left:1861px;top:518px;width:21px;height:20px;border:1px solid #2e2e2e;border-radius:0 4px 4px 0;background:linear-gradient(#aeaeae,#8c8c8c);box-shadow:0 1px 0 rgba(255,255,255,.1);"></div><svg style="left:1864px;top:520px" width="16" height="15" viewBox="0 0 16 15"><path d="M1 2.5 H6 L7 4 H9 V1 H14.5 V13 H1 Z" fill="#e9e1a6" stroke="#3a3820" stroke-width="1"/><rect x="9.8" y="2.4" width="3.8" height="1" fill="#555"/><rect x="9.8" y="4.4" width="3.8" height="1" fill="#555"/><path d="M1 7 H14.5 V13 H1Z" fill="#d8cf88" stroke="#3a3820" stroke-width="1"/></svg>
<div style="left:1673px;top:548px;width:64px;height:117px;border:1px solid #565656;border-radius:5px;background:rgba(255,255,255,.035)"></div>
<div style="left:1745px;top:548px;width:64px;height:117px;border:1px solid #565656;border-radius:5px;background:rgba(255,255,255,.035)"></div>
<div style="left:1817px;top:548px;width:65px;height:60px;border:1px solid #565656;border-radius:5px;background:rgba(255,255,255,.035)"></div>
<div class="t" style="left:1686px;top:561px;color:#000;font-size:11px;">All Model</div>
<div class="t" style="left:1758px;top:561px;color:#000;font-size:11px;">Stadiums</div>
<div class="t" style="left:1830px;top:561px;color:#000;font-size:11px;">Faces On</div>
<div style="left:1682px;top:588px;width:16px;height:16px;border:1px solid #2a2a2a;border-radius:3px;background:linear-gradient(#4a4a4a,#666)"></div><svg style="left:1682px;top:585px" width="17" height="17" viewBox="0 0 17 17"><path d="M3 8.5 L7 13 L15 2.5" fill="none" stroke="#fff" stroke-width="2.2"/></svg>
<div class="t" style="left:1706px;top:591px;color:#fff;font-size:11px;">Imp</div>
<div style="left:1754px;top:588px;width:16px;height:16px;border:1px solid #2a2a2a;border-radius:3px;background:linear-gradient(#444,#5a5a5a)"></div>
<div class="t" style="left:1778px;top:591px;color:#000;font-size:11px;">Imp</div>
<div style="left:1682px;top:614px;width:16px;height:16px;border:1px solid #2a2a2a;border-radius:3px;background:linear-gradient(#444,#5a5a5a)"></div>
<div class="t" style="left:1706px;top:617px;color:#000;font-size:11px;">Indi</div>
<div style="left:1754px;top:614px;width:16px;height:16px;border:1px solid #2a2a2a;border-radius:3px;background:linear-gradient(#444,#5a5a5a)"></div>
<div class="t" style="left:1778px;top:617px;color:#000;font-size:11px;">Imp</div>
<div style="left:1682px;top:640px;width:16px;height:16px;border:1px solid #2a2a2a;border-radius:3px;background:linear-gradient(#444,#5a5a5a)"></div>
<div class="t" style="left:1706px;top:643px;color:#000;font-size:11px;">Imp</div>
<div style="left:1754px;top:640px;width:16px;height:16px;border:1px solid #2a2a2a;border-radius:3px;background:linear-gradient(#444,#5a5a5a)"></div>
<div class="t" style="left:1778px;top:643px;color:#000;font-size:11px;">Imp</div>
<div style="left:1825px;top:587px;width:16px;height:16px;border:1px solid #2a2a2a;border-radius:3px;background:linear-gradient(#444,#5a5a5a)"></div>
<div class="t" style="left:1847px;top:589px;color:#000;font-size:11px;">Impo</div>
<svg style="left:1672px;top:678px" width="16" height="16" viewBox="0 0 16 16"><circle cx="8" cy="8" r="6.8" fill="#e9eef7" stroke="#27365a" stroke-width="1.4"/><circle cx="8" cy="8" r="5.3" fill="#3e5a9a"/><rect x="7" y="6.8" width="2.2" height="5" fill="#fff"/><rect x="6" y="6.8" width="2" height="1.2" fill="#fff"/><rect x="5.8" y="10.8" width="4.6" height="1.2" fill="#fff"/><circle cx="8" cy="4.6" r="1.3" fill="#fff"/></svg>
<div class="t" style="left:1692px;top:680px;color:#000;font-size:11px;">Additional Model Files</div>
<div style="left:1668px;top:700px;width:219px;height:98px;border:1px solid #565656;border-radius:5px;background:rgba(255,255,255,.035)"></div>
<div class="t" style="left:1681px;top:713px;color:#000;font-size:11px;">Hair File:</div><div class="fld" style="left:1747px;top:708px;width:115px;height:20px;border-radius:4px 0 0 4px"><span></span></div><div style="left:1861px;top:708px;width:21px;height:20px;border:1px solid #2e2e2e;border-radius:0 4px 4px 0;background:linear-gradient(#aeaeae,#8c8c8c);box-shadow:0 1px 0 rgba(255,255,255,.1);"></div><svg style="left:1864px;top:710px" width="16" height="15" viewBox="0 0 16 15"><path d="M1 2.5 H6 L7 4 H9 V1 H14.5 V13 H1 Z" fill="#e9e1a6" stroke="#3a3820" stroke-width="1"/><rect x="9.8" y="2.4" width="3.8" height="1" fill="#555"/><rect x="9.8" y="4.4" width="3.8" height="1" fill="#555"/><path d="M1 7 H14.5 V13 H1Z" fill="#d8cf88" stroke="#3a3820" stroke-width="1"/></svg>
<div class="t" style="left:1681px;top:735px;color:#000;font-size:11px;">FaceGen ...</div><div class="fld" style="left:1747px;top:730px;width:115px;height:20px;border-radius:4px 0 0 4px"><span></span></div><div style="left:1861px;top:730px;width:21px;height:20px;border:1px solid #2e2e2e;border-radius:0 4px 4px 0;background:linear-gradient(#aeaeae,#8c8c8c);box-shadow:0 1px 0 rgba(255,255,255,.1);"></div><svg style="left:1864px;top:732px" width="16" height="15" viewBox="0 0 16 15"><path d="M1 2.5 H6 L7 4 H9 V1 H14.5 V13 H1 Z" fill="#e9e1a6" stroke="#3a3820" stroke-width="1"/><rect x="9.8" y="2.4" width="3.8" height="1" fill="#555"/><rect x="9.8" y="4.4" width="3.8" height="1" fill="#555"/><path d="M1 7 H14.5 V13 H1Z" fill="#d8cf88" stroke="#3a3820" stroke-width="1"/></svg>
<div class="t" style="left:1681px;top:757px;color:#000;font-size:11px;">Crowd File:</div><div class="fld" style="left:1747px;top:752px;width:115px;height:20px;border-radius:4px 0 0 4px"><span></span></div><div style="left:1861px;top:752px;width:21px;height:20px;border:1px solid #2e2e2e;border-radius:0 4px 4px 0;background:linear-gradient(#aeaeae,#8c8c8c);box-shadow:0 1px 0 rgba(255,255,255,.1);"></div><svg style="left:1864px;top:754px" width="16" height="15" viewBox="0 0 16 15"><path d="M1 2.5 H6 L7 4 H9 V1 H14.5 V13 H1 Z" fill="#e9e1a6" stroke="#3a3820" stroke-width="1"/><rect x="9.8" y="2.4" width="3.8" height="1" fill="#555"/><rect x="9.8" y="4.4" width="3.8" height="1" fill="#555"/><path d="M1 7 H14.5 V13 H1Z" fill="#d8cf88" stroke="#3a3820" stroke-width="1"/></svg>
<div class="t" style="left:1681px;top:779px;color:#000;font-size:11px;">Lights File:</div><div class="fld" style="left:1747px;top:774px;width:115px;height:20px;border-radius:4px 0 0 4px"><span></span></div><div style="left:1861px;top:774px;width:21px;height:20px;border:1px solid #2e2e2e;border-radius:0 4px 4px 0;background:linear-gradient(#aeaeae,#8c8c8c);box-shadow:0 1px 0 rgba(255,255,255,.1);"></div><svg style="left:1864px;top:776px" width="16" height="15" viewBox="0 0 16 15"><path d="M1 2.5 H6 L7 4 H9 V1 H14.5 V13 H1 Z" fill="#e9e1a6" stroke="#3a3820" stroke-width="1"/><rect x="9.8" y="2.4" width="3.8" height="1" fill="#555"/><rect x="9.8" y="4.4" width="3.8" height="1" fill="#555"/><path d="M1 7 H14.5 V13 H1Z" fill="#d8cf88" stroke="#3a3820" stroke-width="1"/></svg>
<svg style="left:1672px;top:807px" width="16" height="16" viewBox="0 0 16 16"><circle cx="8" cy="8" r="6.8" fill="#e9eef7" stroke="#27365a" stroke-width="1.4"/><circle cx="8" cy="8" r="5.3" fill="#3e5a9a"/><rect x="7" y="6.8" width="2.2" height="5" fill="#fff"/><rect x="6" y="6.8" width="2" height="1.2" fill="#fff"/><rect x="5.8" y="10.8" width="4.6" height="1.2" fill="#fff"/><circle cx="8" cy="4.6" r="1.3" fill="#fff"/></svg>
<div class="t" style="left:1692px;top:809px;color:#000;font-size:11px;">Texture Files</div>
<div style="left:1668px;top:829px;width:219px;height:124px;border:1px solid #565656;border-radius:5px;background:rgba(255,255,255,.035)"></div>
<div class="t" style="left:1681px;top:842px;color:#000;font-size:11px;">Stadium ...</div><div class="fld" style="left:1747px;top:837px;width:115px;height:20px;border-radius:4px 0 0 4px"><span></span></div><div style="left:1861px;top:837px;width:21px;height:20px;border:1px solid #2e2e2e;border-radius:0 4px 4px 0;background:linear-gradient(#aeaeae,#8c8c8c);box-shadow:0 1px 0 rgba(255,255,255,.1);"></div><svg style="left:1864px;top:839px" width="16" height="15" viewBox="0 0 16 15"><path d="M1 2.5 H6 L7 4 H9 V1 H14.5 V13 H1 Z" fill="#e9e1a6" stroke="#3a3820" stroke-width="1"/><rect x="9.8" y="2.4" width="3.8" height="1" fill="#555"/><rect x="9.8" y="4.4" width="3.8" height="1" fill="#555"/><path d="M1 7 H14.5 V13 H1Z" fill="#d8cf88" stroke="#3a3820" stroke-width="1"/></svg>
<div class="t" style="left:1681px;top:864px;color:#000;font-size:11px;">Face Text...</div><div class="fld" style="left:1747px;top:859px;width:115px;height:20px;border-radius:4px 0 0 4px"><span>C:\Users\...tures.rx3</span></div><div style="left:1861px;top:859px;width:21px;height:20px;border:1px solid #2e2e2e;border-radius:0 4px 4px 0;background:linear-gradient(#aeaeae,#8c8c8c);box-shadow:0 1px 0 rgba(255,255,255,.1);"></div><svg style="left:1864px;top:861px" width="16" height="15" viewBox="0 0 16 15"><path d="M1 2.5 H6 L7 4 H9 V1 H14.5 V13 H1 Z" fill="#e9e1a6" stroke="#3a3820" stroke-width="1"/><rect x="9.8" y="2.4" width="3.8" height="1" fill="#555"/><rect x="9.8" y="4.4" width="3.8" height="1" fill="#555"/><path d="M1 7 H14.5 V13 H1Z" fill="#d8cf88" stroke="#3a3820" stroke-width="1"/></svg>
<div class="t" style="left:1681px;top:886px;color:#000;font-size:11px;">Hair Text...</div><div class="fld" style="left:1747px;top:881px;width:115px;height:20px;border-radius:4px 0 0 4px"><span>C:\Users\...tures.rx3</span></div><div style="left:1861px;top:881px;width:21px;height:20px;border:1px solid #2e2e2e;border-radius:0 4px 4px 0;background:linear-gradient(#aeaeae,#8c8c8c);box-shadow:0 1px 0 rgba(255,255,255,.1);"></div><svg style="left:1864px;top:883px" width="16" height="15" viewBox="0 0 16 15"><path d="M1 2.5 H6 L7 4 H9 V1 H14.5 V13 H1 Z" fill="#e9e1a6" stroke="#3a3820" stroke-width="1"/><rect x="9.8" y="2.4" width="3.8" height="1" fill="#555"/><rect x="9.8" y="4.4" width="3.8" height="1" fill="#555"/><path d="M1 7 H14.5 V13 H1Z" fill="#d8cf88" stroke="#3a3820" stroke-width="1"/></svg>
<div class="t" style="left:1681px;top:908px;color:#000;font-size:11px;">Eye Textu...</div><div class="fld" style="left:1747px;top:903px;width:115px;height:20px;border-radius:4px 0 0 4px"><span>C:\Users\...tures.rx3</span></div><div style="left:1861px;top:903px;width:21px;height:20px;border:1px solid #2e2e2e;border-radius:0 4px 4px 0;background:linear-gradient(#aeaeae,#8c8c8c);box-shadow:0 1px 0 rgba(255,255,255,.1);"></div><svg style="left:1864px;top:905px" width="16" height="15" viewBox="0 0 16 15"><path d="M1 2.5 H6 L7 4 H9 V1 H14.5 V13 H1 Z" fill="#e9e1a6" stroke="#3a3820" stroke-width="1"/><rect x="9.8" y="2.4" width="3.8" height="1" fill="#555"/><rect x="9.8" y="4.4" width="3.8" height="1" fill="#555"/><path d="M1 7 H14.5 V13 H1Z" fill="#d8cf88" stroke="#3a3820" stroke-width="1"/></svg>
<div style="left:1678px;top:930px;width:16px;height:16px;border:1px solid #2a2a2a;border-radius:3px;background:linear-gradient(#4a4a4a,#666)"></div><svg style="left:1678px;top:927px" width="17" height="17" viewBox="0 0 17 17"><path d="M3 8.5 L7 13 L15 2.5" fill="none" stroke="#fff" stroke-width="2.2"/></svg>
<div class="t" style="left:1701px;top:932px;color:#fff;font-size:11px;">Create ...re Files</div>
<div class="btn c" style="left:1796px;top:927px;width:87px;height:22px;"><span style="">Assign ...terials</span></div>
<div class="btn c" style="left:1668px;top:960px;width:219px;height:39px;border-radius:5px"><span style="">IMPORT</span></div>
<div class="t" style="left:1676px;top:1009px;color:#000;font-size:11px;">v0.66, m...</div><div class="t" style="left:1746px;top:1009px;color:#000;font-size:11px;">Visit Offici...</div><div class="t" style="left:1822px;top:1009px;color:#000;font-size:11px;">Visit Offici...</div>
<!-- overlay -->
<div style="left:1912px;top:30px;width:7px;height:1002px;background:#d7e4f2"></div>
<div style="left:1919px;top:8px;width:1px;height:1032px;background:#4a5560"></div>
<!-- watermark -->
<svg style="left:1700px;top:985px" width="220" height="95" viewBox="1700 985 220 95">
<defs>
<linearGradient id="mbody" x1="0" y1="0" x2="1" y2="1"><stop offset="0" stop-color="#f2f2f2"/><stop offset=".6" stop-color="#c4c4c8"/><stop offset="1" stop-color="#8a8a90"/></linearGradient>
<filter id="wsh" x="-10%" y="-30%" width="120%" height="160%"><feGaussianBlur stdDeviation="1.1"/></filter>
</defs>
<!-- mouse cable -->
<path d="M1753 1004 Q1756 994 1763 996 Q1772 1000 1778 1020" fill="none" stroke="#d8d8d8" stroke-width="1.2" opacity=".9"/>
<!-- body -->
<path d="M1733 1030 Q1732 1006 1752 1004 Q1772 1003 1774 1028 L1774 1050 Q1772 1066 1752 1065 Q1734 1064 1733 1046 Z" fill="url(#mbody)" stroke="#77777c" stroke-width="1" opacity=".93"/>
<!-- eyes -->
<ellipse cx="1748" cy="1019" rx="4.2" ry="5" fill="#fff" stroke="#333" stroke-width=".8"/><ellipse cx="1757" cy="1019" rx="4.2" ry="5" fill="#fff" stroke="#333" stroke-width=".8"/>
<circle cx="1749" cy="1021" r="1.7" fill="#222"/><circle cx="1756.5" cy="1021" r="1.7" fill="#222"/>
<path d="M1743 1012 Q1748 1008 1752 1012 M1754 1012 Q1759 1008 1763 1013" fill="none" stroke="#333" stroke-width="1"/>
<!-- nose -->
<ellipse cx="1752" cy="1029" rx="9" ry="6" fill="#b9b9be" stroke="#6a6a70" stroke-width=".7"/>
<!-- mouth -->
<path d="M1740 1032 Q1752 1040 1766 1030 Q1764 1050 1752 1052 Q1744 1050 1740 1032Z" fill="#555" stroke="#333" stroke-width=".8"/>
<path d="M1743 1036 Q1752 1041 1763 1035 L1762 1041 Q1752 1046 1745 1042Z" fill="#fff"/>
<!-- hand -->
<path d="M1726 1016 Q1730 1014 1731 1022 L1731 1030 Q1738 1030 1738 1036 L1737 1048 Q1730 1052 1720 1050 Q1713 1046 1714 1038 Q1714 1032 1722 1031 Z" fill="#f4f4f4" stroke="#9a9aa0" stroke-width="1" opacity=".95"/>
<path d="M1716 1036 H1732 M1716 1041 H1733 M1717 1046 H1732" stroke="#b0b0b6" stroke-width=".9"/>
<!-- foot / plug -->
<path d="M1783 1041 L1800 1036 L1812 1040 L1800 1046 L1788 1049 Z" fill="#e8e8e8" stroke="#888" stroke-width=".8" opacity=".9"/>
<path d="M1812 1040 L1830 1043" stroke="#bbb" stroke-width="1.5"/>
<!-- big M -->
<text x="1775" y="1029" font-family="'Liberation Sans',sans-serif" font-style="italic" font-weight="bold" font-size="46" fill="#55555e" stroke="#c2ba22" stroke-width="1.5" opacity=".9" textLength="48" lengthAdjust="spacingAndGlyphs">M</text>
<!-- WAY -->
<text x="1822" y="1047" font-family="'Liberation Sans',sans-serif" font-style="italic" font-weight="bold" font-size="37" fill="#55555e" stroke="#cfc724" stroke-width="1.5" opacity=".9" textLength="82" lengthAdjust="spacingAndGlyphs">WAY</text>
<path d="M1822 1034 H1898 M1822 1038 H1896 M1822 1042 H1894" stroke="#d8d028" stroke-width="1.2" opacity=".7"/>
<!-- ODDING -->
<text x="1820" y="1014" font-family="'Liberation Sans',sans-serif" font-style="italic" font-weight="bold" font-size="19" fill="#e6df2a" stroke="#2a2a10" stroke-width="1.6" paint-order="stroke" textLength="88" lengthAdjust="spacingAndGlyphs">ODDING</text>
<!-- url -->
<text x="1777" y="1066" font-family="'Liberation Sans',sans-serif" font-size="15.5" fill="#111" filter="url(#wsh)" textLength="131" lengthAdjust="spacingAndGlyphs">www.moddingway.com</text>
<text x="1776" y="1065" font-family="'Liberation Sans',sans-serif" font-size="15.5" fill="#fff" textLength="131" lengthAdjust="spacingAndGlyphs">www.moddingway.com</text>
</svg>
</body></html>
